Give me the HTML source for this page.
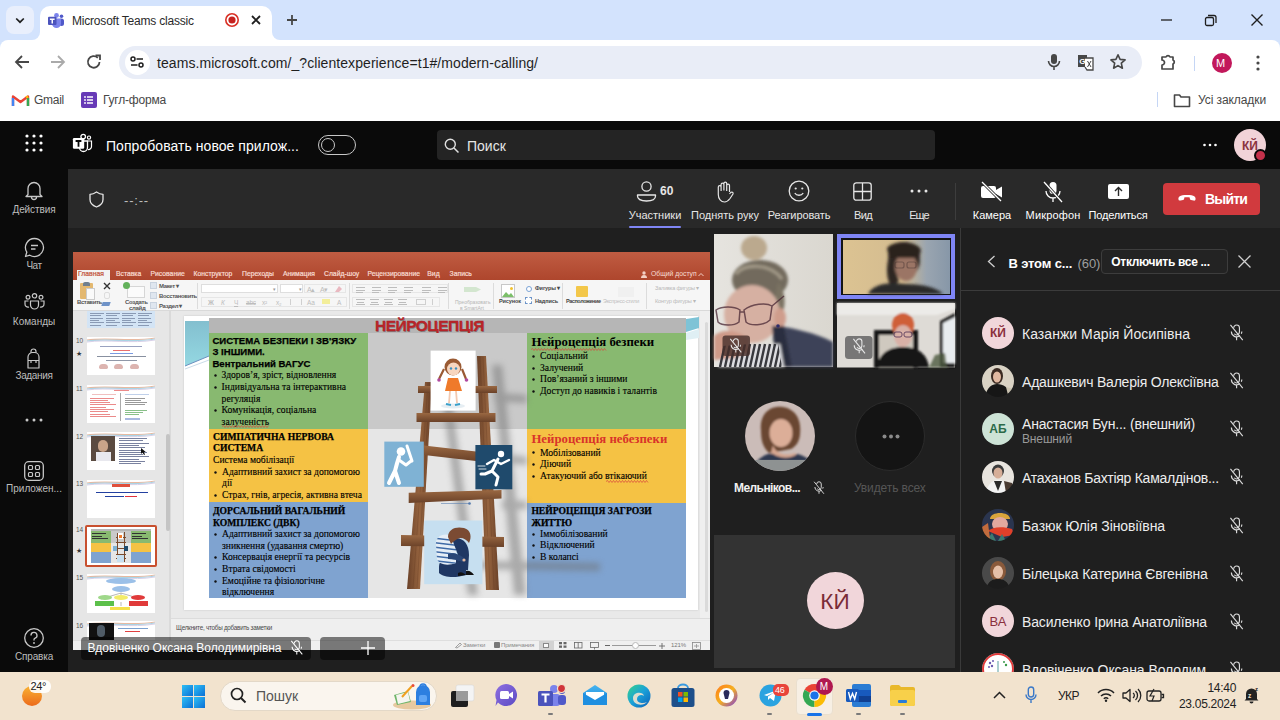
<!DOCTYPE html>
<html><head><meta charset="utf-8">
<style>
*{margin:0;padding:0;box-sizing:border-box}
html,body{width:1280px;height:720px;overflow:hidden;background:#1f1f1f;font-family:"Liberation Sans",sans-serif}
.a{position:absolute}
.t{position:absolute;white-space:nowrap;line-height:1}
svg{position:absolute;overflow:visible}
</style></head><body>
<!-- ===== CHROME TAB STRIP ===== -->
<div class="a" style="left:0;top:0;width:1280px;height:40px;background:#d3e3fd"></div>
<div class="a" style="left:6px;top:6px;width:28px;height:28px;border-radius:8px;background:#e9effc"></div>
<svg style="left:14px;top:14px" width="12" height="12"><path d="M2.2 4.5 L6 8.2 L9.8 4.5" fill="none" stroke="#1f1f1f" stroke-width="1.7"/></svg>
<!-- active tab -->
<div class="a" style="left:40px;top:6px;width:232px;height:36px;background:#fff;border-radius:10px 10px 0 0"></div>
<div class="a" style="left:32px;top:32px;width:8px;height:8px;background:#fff"></div>
<div class="a" style="left:32px;top:32px;width:8px;height:8px;background:#d3e3fd;border-radius:0 0 8px 0"></div>
<div class="a" style="left:272px;top:32px;width:8px;height:8px;background:#fff"></div>
<div class="a" style="left:272px;top:32px;width:8px;height:8px;background:#d3e3fd;border-radius:0 0 0 8px"></div>
<!-- teams tab icon -->
<svg style="left:48px;top:12.5px" width="16" height="16" viewBox="0 0 16 16"><circle cx="13.5" cy="3.2" r="1.8" fill="#5059c9"/><rect x="11" y="5.5" width="5" height="7.5" rx="2.5" fill="#5059c9"/><circle cx="8.5" cy="2.4" r="2.4" fill="#7b83eb"/><path d="M4 5.5 H13 V10.5 A4.5 4.5 0 0 1 4 10.5 Z" fill="#7b83eb"/><rect x="0" y="3.8" width="8.5" height="8.2" rx="1" fill="#4b53bc"/><path d="M1.9 6.2 H6.6 M4.25 6.2 V10.6" stroke="#fff" stroke-width="1.5"/></svg>
<div class="t" style="left:72px;top:15px;font-size:12px;letter-spacing:-0.2px;color:#2a2a2a">Microsoft Teams classic</div>
<svg style="left:224px;top:12px" width="16" height="16"><circle cx="8" cy="8" r="6.2" fill="none" stroke="#d93025" stroke-width="1.6"/><circle cx="8" cy="8" r="3.6" fill="#c5221f"/></svg>
<svg style="left:250px;top:14px" width="12" height="12"><path d="M2 2 L10 10 M10 2 L2 10" stroke="#1f1f1f" stroke-width="1.8"/></svg>
<svg style="left:286px;top:14px" width="12" height="12"><path d="M6 1 V11 M1 6 H11" stroke="#474747" stroke-width="1.8"/></svg>
<!-- window controls -->
<svg style="left:1160px;top:14px" width="14" height="12"><path d="M1 6 H12" stroke="#1f1f1f" stroke-width="1.3"/></svg>
<svg style="left:1204px;top:14px" width="14" height="12"><rect x="1.5" y="3.5" width="8" height="8" rx="1.5" fill="none" stroke="#1f1f1f" stroke-width="1.3"/><path d="M4 1.5 H10 a2 2 0 0 1 2 2 V9" fill="none" stroke="#1f1f1f" stroke-width="1.3"/></svg>
<svg style="left:1250px;top:14px" width="14" height="12"><path d="M1.5 0.5 L12.5 11.5 M12.5 0.5 L1.5 11.5" stroke="#1f1f1f" stroke-width="1.4"/></svg>

<!-- ===== TOOLBAR ===== -->
<div class="a" style="left:0;top:40px;width:1280px;height:81px;background:#fff"></div>
<div class="a" style="left:1272px;top:40px;width:8px;height:8px;background:#d3e3fd"></div>
<div class="a" style="left:0;top:40px;width:8px;height:8px;background:#d3e3fd"></div>
<div class="a" style="left:0;top:40px;width:16px;height:16px;background:#fff;border-top-left-radius:8px"></div>
<div class="a" style="left:1264px;top:40px;width:16px;height:16px;background:#fff;border-top-right-radius:8px"></div>
<svg style="left:14px;top:54px" width="16" height="16"><path d="M15 8 H2 M8 2 L2 8 L8 14" fill="none" stroke="#474747" stroke-width="1.8"/></svg>
<svg style="left:50px;top:54px" width="16" height="16"><path d="M1 8 H14 M8 2 L14 8 L8 14" fill="none" stroke="#aaa" stroke-width="1.8"/></svg>
<svg style="left:86px;top:54px" width="16" height="16"><path d="M13.5 8 A5.8 5.8 0 1 1 11.8 3.8" fill="none" stroke="#474747" stroke-width="1.8"/><path d="M9.5 1.5 H14 V6" fill="none" stroke="#474747" stroke-width="1.8"/></svg>
<div class="a" style="left:119px;top:46px;width:1023px;height:33px;border-radius:17px;background:#e9edf7"></div>
<div class="a" style="left:125px;top:50px;width:25px;height:25px;border-radius:13px;background:#fff"></div>
<svg style="left:130px;top:56px" width="14" height="12"><path d="M6.5 3 H13 M1 9 H7.5" stroke="#1f1f1f" stroke-width="1.7"/><circle cx="3" cy="3" r="2" fill="none" stroke="#1f1f1f" stroke-width="1.5"/><circle cx="11" cy="9" r="2" fill="none" stroke="#1f1f1f" stroke-width="1.5"/></svg>
<div class="t" style="left:157px;top:56px;font-size:14px;letter-spacing:0.07px;color:#1f1f1f">teams.microsoft.com/_?clientexperience=t1#/modern-calling/</div>
<!-- mic -->
<svg style="left:1046px;top:53px" width="16" height="18"><rect x="5" y="1" width="6" height="10" rx="3" fill="#474747"/><path d="M2.5 8 A5.5 5.5 0 0 0 13.5 8 M8 13.5 V17" fill="none" stroke="#474747" stroke-width="1.6"/></svg>
<!-- translate -->
<svg style="left:1077px;top:54px" width="18" height="17"><rect x="1" y="1" width="9" height="12" fill="#474747"/><text x="2.2" y="10" font-size="8" font-family="Liberation Sans" font-weight="bold" fill="#fff">G</text><path d="M8 4 H16 V16 H10 L8 13" fill="#fff" stroke="#474747" stroke-width="1.3"/><path d="M10.5 7 L14 13 M14 7 L10.5 13" stroke="#474747" stroke-width="1"/></svg>
<!-- star -->
<svg style="left:1109px;top:53px" width="18" height="18"><path d="M9 1.8 L11.1 6.4 L16.1 6.9 L12.3 10.2 L13.4 15.2 L9 12.6 L4.6 15.2 L5.7 10.2 L1.9 6.9 L6.9 6.4 Z" fill="none" stroke="#474747" stroke-width="1.6" stroke-linejoin="round"/></svg>
<!-- extensions -->
<svg style="left:1160px;top:54px" width="18" height="17"><path d="M2 3 H6 A2.2 2.2 0 0 1 10 3 H13 V6 A2.2 2.2 0 0 1 13 10 V15 H2 V11 A2.2 2.2 0 0 0 2 6 Z" fill="none" stroke="#474747" stroke-width="1.7" stroke-linejoin="round"/></svg>
<div class="a" style="left:1194px;top:56px;width:1px;height:15px;background:#c5d6f5"></div>
<div class="a" style="left:1212px;top:53px;width:20px;height:20px;border-radius:10px;background:#c2185b"></div>
<div class="t" style="left:1216px;top:58px;font-size:11px;color:#fff">M</div>
<svg style="left:1254px;top:54px" width="8" height="18"><circle cx="4" cy="3" r="1.6" fill="#474747"/><circle cx="4" cy="9" r="1.6" fill="#474747"/><circle cx="4" cy="15" r="1.6" fill="#474747"/></svg>
<!-- bookmarks -->
<svg style="left:12px;top:94px" width="17" height="13" viewBox="0 0 17 13"><path d="M1 12 V2.5 L8.5 8 L16 2.5 V12" fill="none" stroke="#ea4335" stroke-width="2.4" stroke-linejoin="round"/><path d="M1 4 V12" stroke="#4285f4" stroke-width="2.4"/><path d="M16 4 V12" stroke="#34a853" stroke-width="2.4"/><path d="M14 3.5 L16 2.5" stroke="#fbbc04" stroke-width="2.4"/></svg>
<div class="t" style="left:34px;top:94px;font-size:12px;letter-spacing:-0.27px;color:#474747">Gmail</div>
<div class="a" style="left:81px;top:92px;width:16px;height:16px;background:#673ab7;border-radius:2px"></div>
<svg style="left:81px;top:92px" width="16" height="16"><path d="M6 5 H12 M6 8 H12 M6 11 H12" stroke="#fff" stroke-width="1.3"/><circle cx="4" cy="5" r=".9" fill="#fff"/><circle cx="4" cy="8" r=".9" fill="#fff"/><circle cx="4" cy="11" r=".9" fill="#fff"/></svg>
<div class="t" style="left:103px;top:94px;font-size:12px;letter-spacing:-0.2px;color:#474747">Гугл-форма</div>
<div class="a" style="left:1157px;top:92px;width:1px;height:15px;background:#c5d6f5"></div>
<svg style="left:1173px;top:93px" width="18" height="15"><path d="M1.5 2 H6.5 L8 4 H16.5 V13.5 H1.5 Z" fill="none" stroke="#474747" stroke-width="1.6" stroke-linejoin="round"/></svg>
<div class="t" style="left:1198px;top:94px;font-size:12px;letter-spacing:-0.08px;color:#474747">Усі закладки</div>

<!-- ===== TEAMS TOP BAR ===== -->
<div class="a" style="left:0;top:121px;width:1280px;height:48px;background:#0a0a0a"></div>

<!-- waffle -->
<svg style="left:25px;top:134px" width="18" height="18"><g fill="#fff"><circle cx="2" cy="2" r="1.6"/><circle cx="9" cy="2" r="1.6"/><circle cx="16" cy="2" r="1.6"/><circle cx="2" cy="9" r="1.6"/><circle cx="9" cy="9" r="1.6"/><circle cx="16" cy="9" r="1.6"/><circle cx="2" cy="16" r="1.6"/><circle cx="9" cy="16" r="1.6"/><circle cx="16" cy="16" r="1.6"/></g></svg>
<!-- teams logo white -->
<svg style="left:72px;top:134px" width="21" height="19" viewBox="0 0 21 19"><circle cx="11.2" cy="2.6" r="2.3" fill="none" stroke="#fff" stroke-width="1.3"/><circle cx="17" cy="3.6" r="1.6" fill="none" stroke="#fff" stroke-width="1.2"/><path d="M7.5 7 H15.5 V13.5 A4 4 0 0 1 7.5 13.5 Z" fill="none" stroke="#fff" stroke-width="1.3"/><path d="M15.5 7 H19.5 V12.5 A3 3 0 0 1 16 15.5" fill="none" stroke="#fff" stroke-width="1.2"/><rect x="0.9" y="4" width="11.3" height="10.7" rx="1.2" fill="#fff"/><path d="M3.6 7 H9.4 M6.5 7 V12.8" stroke="#0a0a0a" stroke-width="1.8"/></svg>
<div class="t" style="left:106px;top:139px;font-size:14px;letter-spacing:0.05px;color:#fff">Попробовать новое прилож...</div>
<div class="a" style="left:318px;top:135px;width:38px;height:20px;border-radius:10px;border:1px solid #c8c8c8"></div>
<div class="a" style="left:320.5px;top:138px;width:14px;height:14px;border-radius:7px;border:1px solid #c8c8c8"></div>
<!-- search -->
<div class="a" style="left:437px;top:130px;width:498px;height:30px;border-radius:4px;background:#242424"></div>
<svg style="left:444px;top:138px" width="16" height="16"><circle cx="6.3" cy="6.3" r="5" fill="none" stroke="#e0e0e0" stroke-width="1.4"/><path d="M10 10 L14.5 14.5" stroke="#e0e0e0" stroke-width="1.5"/></svg>
<div class="t" style="left:467px;top:139px;font-size:14px;color:#e6e6e6">Поиск</div>
<svg style="left:1202px;top:143px" width="16" height="4"><g fill="#fff"><circle cx="2.5" cy="2" r="1.3"/><circle cx="8" cy="2" r="1.3"/><circle cx="13.5" cy="2" r="1.3"/></g></svg>
<div class="a" style="left:1234px;top:129px;width:32px;height:32px;border-radius:16px;background:#f1d3d8"></div>
<div class="t" style="left:1234px;top:139.5px;width:32px;text-align:center;font-size:12px;font-weight:700;color:#8a3340">КЙ</div>
<div class="a" style="left:1254px;top:149px;width:13px;height:13px;border-radius:7px;background:#c4314b;border:2px solid #0a0a0a"></div>

<!-- ===== LEFT RAIL ===== -->
<div class="a" style="left:0;top:169px;width:68px;height:503px;background:#0a0a0a"></div>
<svg style="left:24px;top:180px" width="20" height="21" viewBox="0 0 20 21"><path d="M4 14.5 V8.5 A6 6 0 0 1 16 8.5 V14.5 L18 16.5 H2 Z" fill="none" stroke="#c8c8c8" stroke-width="1.3" stroke-linejoin="round"/><path d="M7.5 17 A2.5 2.5 0 0 0 12.5 17" fill="none" stroke="#c8c8c8" stroke-width="1.3"/></svg>
<div class="t" style="left:0;top:205px;width:68px;text-align:center;font-size:10px;letter-spacing:-0.1px;color:#bdbdbd">Действия</div>
<svg style="left:24px;top:237px" width="21" height="21" viewBox="0 0 21 21"><path d="M10.5 1.5 A9 9 0 1 1 5.8 18.2 L1.5 19.5 L2.8 15.2 A9 9 0 0 1 10.5 1.5 Z" fill="none" stroke="#c8c8c8" stroke-width="1.3" stroke-linejoin="round"/><path d="M7 8.5 H14 M7 12 H11.5" stroke="#c8c8c8" stroke-width="1.3"/></svg>
<div class="t" style="left:0;top:261px;width:68px;text-align:center;font-size:10px;letter-spacing:-0.5px;color:#bdbdbd">Чат</div>
<svg style="left:24px;top:293px" width="21" height="17" viewBox="0 0 21 17"><circle cx="10.5" cy="2.8" r="2.2" fill="none" stroke="#c8c8c8" stroke-width="1.2"/><circle cx="4" cy="4.2" r="1.9" fill="none" stroke="#c8c8c8" stroke-width="1.2"/><circle cx="17" cy="4.2" r="1.9" fill="none" stroke="#c8c8c8" stroke-width="1.2"/><path d="M6.5 8 H14.5 V12 A4 4 0 0 1 6.5 12 Z" fill="none" stroke="#c8c8c8" stroke-width="1.2"/><path d="M4.5 8 H1 V11 A3 3 0 0 0 5 14" fill="none" stroke="#c8c8c8" stroke-width="1.2"/><path d="M16.5 8 H20 V11 A3 3 0 0 1 16 14" fill="none" stroke="#c8c8c8" stroke-width="1.2"/></svg>
<div class="t" style="left:0;top:317px;width:68px;text-align:center;font-size:10px;color:#bdbdbd">Команды</div>
<svg style="left:25px;top:349px" width="17" height="20" viewBox="0 0 17 20"><path d="M6 3.5 V2.5 A2.5 2.5 0 0 1 11 2.5 V3.5" fill="none" stroke="#c8c8c8" stroke-width="1.2"/><path d="M3 19 V8 A4.5 4.5 0 0 1 7.5 3.5 H9.5 A4.5 4.5 0 0 1 14 8 V19 Z" fill="none" stroke="#c8c8c8" stroke-width="1.2" stroke-linejoin="round"/><path d="M3 11.5 H14 M6 11.5 V14 M11 11.5 V14" fill="none" stroke="#c8c8c8" stroke-width="1.2"/></svg>
<div class="t" style="left:0;top:371px;width:68px;text-align:center;font-size:10px;letter-spacing:-0.35px;color:#bdbdbd">Задания</div>
<svg style="left:25px;top:418px" width="18" height="4"><g fill="#c8c8c8"><circle cx="2" cy="2" r="1.5"/><circle cx="9" cy="2" r="1.5"/><circle cx="16" cy="2" r="1.5"/></g></svg>
<svg style="left:24px;top:461px" width="20" height="20" viewBox="0 0 20 20"><rect x="0.7" y="0.7" width="18.6" height="18.6" rx="4" fill="none" stroke="#c8c8c8" stroke-width="1.3"/><rect x="4.5" y="4.5" width="4" height="4" rx="1" fill="none" stroke="#c8c8c8" stroke-width="1.2"/><rect x="11.5" y="4.5" width="4" height="4" rx="1" fill="none" stroke="#c8c8c8" stroke-width="1.2"/><rect x="4.5" y="11.5" width="4" height="4" rx="1" fill="none" stroke="#c8c8c8" stroke-width="1.2"/><rect x="11.5" y="11.5" width="4" height="4" rx="1" fill="none" stroke="#c8c8c8" stroke-width="1.2"/></svg>
<div class="t" style="left:0;top:484px;width:68px;text-align:center;font-size:10px;color:#bdbdbd">Приложен...</div>
<svg style="left:24px;top:628px" width="20" height="20" viewBox="0 0 20 20"><circle cx="10" cy="10" r="9.3" fill="none" stroke="#c8c8c8" stroke-width="1.3"/><path d="M7 7.5 A3 3 0 1 1 10.8 10.3 C10.2 10.6 10 11 10 11.8 V12.5" fill="none" stroke="#c8c8c8" stroke-width="1.3"/><circle cx="10" cy="15" r=".9" fill="#c8c8c8"/></svg>
<div class="t" style="left:0;top:652px;width:68px;text-align:center;font-size:10px;letter-spacing:-0.15px;color:#bdbdbd">Справка</div>

<!-- ===== MEETING HEADER ===== -->
<div class="a" style="left:68px;top:169px;width:1212px;height:59px;background:#292929"></div>
<svg style="left:89px;top:191px" width="15" height="17" viewBox="0 0 15 17"><path d="M7.5 1 C5 2.8 3 3.3 1 3.3 V8.5 C1 12 3.5 14.5 7.5 16 C11.5 14.5 14 12 14 8.5 V3.3 C12 3.3 10 2.8 7.5 1 Z" fill="none" stroke="#e6e6e6" stroke-width="1.3" stroke-linejoin="round"/></svg>
<div class="t" style="left:124px;top:194px;font-size:13px;letter-spacing:0.8px;color:#bdbdbd">--:--</div>
<!-- participants -->
<svg style="left:636px;top:181px" width="21" height="21" viewBox="0 0 21 21"><circle cx="10.5" cy="5.5" r="4.6" fill="none" stroke="#e6e6e6" stroke-width="1.3"/><path d="M1.5 14 H19.5 V15 C19.5 18 16 20 10.5 20 C5 20 1.5 18 1.5 15 Z" fill="none" stroke="#e6e6e6" stroke-width="1.3" stroke-linejoin="round"/></svg>
<div class="t" style="left:660px;top:185px;font-size:12px;font-weight:700;color:#e6e6e6">60</div>
<div class="t" style="left:605px;top:210px;width:100px;text-align:center;font-size:11px;color:#e6e6e6">Участники</div>
<div class="a" style="left:629px;top:225.8px;width:52px;height:2.4px;border-radius:1.2px;background:#7f85f5"></div>
<!-- hand -->
<svg style="left:713.5px;top:180.5px" width="22" height="22" viewBox="0 0 22 22"><g transform="translate(21.5,0) scale(-1,1)"><path d="M6 11 V4.5 A1.4 1.4 0 0 1 8.8 4.5 V10 M8.8 9.5 V2.5 A1.4 1.4 0 0 1 11.6 2.5 V9.5 M11.6 9.5 V3.5 A1.4 1.4 0 0 1 14.4 3.5 V10 M14.4 10 V6 A1.4 1.4 0 0 1 17.2 6 V13.5 C17.2 18 14.5 21 11 21 C8.5 21 7 19.5 5.5 17.5 L2.5 13 A1.4 1.4 0 0 1 4.8 11.5 L6 13" fill="none" stroke="#e6e6e6" stroke-width="1.2" stroke-linejoin="round"/></g></svg>
<div class="t" style="left:675px;top:210px;width:100px;text-align:center;font-size:11px;color:#e6e6e6">Поднять руку</div>
<!-- smile -->
<svg style="left:788px;top:180px" width="22" height="22" viewBox="0 0 22 22"><circle cx="11" cy="11" r="9.8" fill="none" stroke="#e6e6e6" stroke-width="1.3"/><circle cx="7.7" cy="8.5" r="1.1" fill="#e6e6e6"/><circle cx="14.3" cy="8.5" r="1.1" fill="#e6e6e6"/><path d="M6.8 13 C8.5 16 13.5 16 15.2 13" fill="none" stroke="#e6e6e6" stroke-width="1.3"/></svg>
<div class="t" style="left:749px;top:210px;width:100px;text-align:center;font-size:11px;letter-spacing:-0.12px;color:#e6e6e6">Реагировать</div>
<!-- view grid -->
<svg style="left:853px;top:182px" width="19" height="19" viewBox="0 0 19 19"><rect x="0.8" y="0.8" width="17.4" height="17.4" rx="2.5" fill="none" stroke="#e6e6e6" stroke-width="1.3"/><path d="M9.5 1 V18 M1 9.5 H18" stroke="#e6e6e6" stroke-width="1.3"/></svg>
<div class="t" style="left:813px;top:210px;width:100px;text-align:center;font-size:11px;letter-spacing:-0.6px;color:#e6e6e6">Вид</div>
<svg style="left:910px;top:189px" width="18" height="4"><g fill="#e6e6e6"><circle cx="2" cy="2" r="1.5"/><circle cx="9" cy="2" r="1.5"/><circle cx="16" cy="2" r="1.5"/></g></svg>
<div class="t" style="left:869px;top:210px;width:100px;text-align:center;font-size:11px;letter-spacing:-0.9px;color:#e6e6e6">Еще</div>
<div class="a" style="left:955px;top:183px;width:1px;height:37px;background:#3d3d3d"></div>
<!-- camera off -->
<svg style="left:980px;top:181px" width="24" height="21" viewBox="0 0 24 21"><rect x="1" y="5" width="15" height="12" rx="2" fill="#fff"/><path d="M16 9 L22 5.5 V16.5 L16 13 Z" fill="#fff"/><path d="M2 1 L21 20" stroke="#292929" stroke-width="3"/><path d="M2 1 L21 20" stroke="#fff" stroke-width="1.3"/></svg>
<div class="t" style="left:942px;top:210px;width:100px;text-align:center;font-size:11px;color:#fff">Камера</div>
<!-- mic off -->
<svg style="left:1042px;top:181px" width="22" height="22" viewBox="0 0 22 22"><rect x="7.5" y="1" width="7" height="12" rx="3.5" fill="#fff"/><path d="M4 10 A7 7 0 0 0 18 10 M11 17 V21" fill="none" stroke="#fff" stroke-width="1.3"/><path d="M2 1 L20 21" stroke="#292929" stroke-width="3"/><path d="M2 1 L20 21" stroke="#fff" stroke-width="1.3"/></svg>
<div class="t" style="left:1003px;top:210px;width:100px;text-align:center;font-size:11px;letter-spacing:0.15px;color:#fff">Микрофон</div>
<!-- share -->
<svg style="left:1108px;top:184px" width="21" height="15" viewBox="0 0 21 15"><rect x="0" y="0" width="21" height="15" rx="2" fill="#fff"/><path d="M10.5 12 V3.5 M7 7 L10.5 3.5 L14 7" fill="none" stroke="#292929" stroke-width="1.4"/></svg>
<div class="t" style="left:1068px;top:210px;width:100px;text-align:center;font-size:11px;letter-spacing:-0.17px;color:#fff">Поделиться</div>
<!-- leave -->
<div class="a" style="left:1163px;top:183px;width:97px;height:32px;border-radius:4px;background:#d13a3e"></div>
<svg style="left:1177px;top:193px" width="20" height="9" viewBox="0 0 20 9"><path d="M1.5 6.5 C1 4 2.5 2 10 2 C17.5 2 19 4 18.5 6.5 C18.3 7.5 17.5 7.8 16.5 7.6 L14 7 C13.2 6.8 12.8 6.3 12.8 5.5 V4.6 C11 4.2 9 4.2 7.2 4.6 V5.5 C7.2 6.3 6.8 6.8 6 7 L3.5 7.6 C2.5 7.8 1.7 7.5 1.5 6.5 Z" fill="#fff"/></svg>
<div class="t" style="left:1205px;top:192px;font-size:14px;font-weight:700;letter-spacing:-0.8px;color:#fff">Выйти</div>

<!-- ===== STAGE ===== -->
<div class="a" style="left:68px;top:228px;width:893px;height:444px;background:#1f1f1f"></div>
<div class="a" style="left:73px;top:252px;width:637px;height:398px;background:#e8e8e8;"></div>
<div class="a" style="left:73px;top:252px;width:637px;height:28px;background:linear-gradient(#c05c42,#ae462d);"></div>
<div class="a" style="left:77px;top:270px;width:33px;height:10px;background:#f3f3f3;"></div>
<div class="t" style="left:78.0px;top:271.44px;font-family:'Liberation Sans',sans-serif;font-size:6.8px;font-weight:400;color:#c24f35;letter-spacing:0px;-webkit-text-stroke:0.2px #c24f35">Главная</div>
<div class="t" style="left:116.0px;top:271.44px;font-family:'Liberation Sans',sans-serif;font-size:6.8px;font-weight:400;color:#f8dcd3;letter-spacing:0px;-webkit-text-stroke:0.2px #f8dcd3">Вставка</div>
<div class="t" style="left:150.5px;top:271.44px;font-family:'Liberation Sans',sans-serif;font-size:6.8px;font-weight:400;color:#f8dcd3;letter-spacing:0px;-webkit-text-stroke:0.2px #f8dcd3">Рисование</div>
<div class="t" style="left:193.5px;top:271.44px;font-family:'Liberation Sans',sans-serif;font-size:6.8px;font-weight:400;color:#f8dcd3;letter-spacing:0px;-webkit-text-stroke:0.2px #f8dcd3">Конструктор</div>
<div class="t" style="left:242.0px;top:271.44px;font-family:'Liberation Sans',sans-serif;font-size:6.8px;font-weight:400;color:#f8dcd3;letter-spacing:0px;-webkit-text-stroke:0.2px #f8dcd3">Переходы</div>
<div class="t" style="left:283.0px;top:271.44px;font-family:'Liberation Sans',sans-serif;font-size:6.8px;font-weight:400;color:#f8dcd3;letter-spacing:0px;-webkit-text-stroke:0.2px #f8dcd3">Анимация</div>
<div class="t" style="left:324.0px;top:271.44px;font-family:'Liberation Sans',sans-serif;font-size:6.8px;font-weight:400;color:#f8dcd3;letter-spacing:0px;-webkit-text-stroke:0.2px #f8dcd3">Слайд-шоу</div>
<div class="t" style="left:367.5px;top:271.44px;font-family:'Liberation Sans',sans-serif;font-size:6.8px;font-weight:400;color:#f8dcd3;letter-spacing:0px;-webkit-text-stroke:0.2px #f8dcd3">Рецензирование</div>
<div class="t" style="left:427.3px;top:271.44px;font-family:'Liberation Sans',sans-serif;font-size:6.8px;font-weight:400;color:#f8dcd3;letter-spacing:0px;-webkit-text-stroke:0.2px #f8dcd3">Вид</div>
<div class="t" style="left:449.6px;top:271.44px;font-family:'Liberation Sans',sans-serif;font-size:6.8px;font-weight:400;color:#f8dcd3;letter-spacing:0px;-webkit-text-stroke:0.2px #f8dcd3">Запись</div>
<div class="t" style="left:651.0px;top:271.44px;font-family:'Liberation Sans',sans-serif;font-size:6.8px;font-weight:400;color:#f8dcd3;letter-spacing:0px;">Общий доступ</div>
<svg style="left:641px;top:271px" width="8" height="7"><circle cx="3" cy="2" r="1.7" fill="#f3d0c5"/><path d="M0 7 A3 3 0 0 1 6 7Z" fill="#f3d0c5"/></svg>
<svg style="left:698px;top:272px" width="6" height="5"><path d="M0.5 4 L3 1.5 L5.5 4" fill="none" stroke="#f3d0c5" stroke-width="1"/></svg>
<div class="a" style="left:73px;top:280px;width:637px;height:31px;background:#f6f6f6;border-bottom:1px solid #d9d9d9"></div>
<div class="a" style="left:80px;top:283px;width:13px;height:16px;background:#e3b870;border-radius:1px"></div>
<div class="a" style="left:86px;top:288px;width:9px;height:12px;background:#fafafa;border:1px solid #ccc"></div>
<div class="a" style="left:83px;top:282px;width:7px;height:4px;background:#6f7f8f;border-radius:2px 2px 0 0"></div>
<div class="t" style="left:77.0px;top:298.92px;font-family:'Liberation Sans',sans-serif;font-size:6px;font-weight:700;color:#555;letter-spacing:-0.4px;">Вставить</div>
<svg style="left:103px;top:282px" width="8" height="8"><path d="M1 1 L7 7 M7 1 L1 7" stroke="#333" stroke-width="1.4"/></svg>
<div class="a" style="left:104px;top:292px;width:6px;height:7px;background:#f6f6f6;border:1px solid #ddd;border-radius:2px"></div>
<div class="a" style="left:102px;top:302px;width:8px;height:4px;background:#6f93c8;transform:skewX(-20deg)"></div>
<div class="a" style="left:127px;top:286px;width:18px;height:12px;background:#fbfbfb;border:1px solid #d6d6d6"></div>
<div class="a" style="left:123px;top:282px;width:7px;height:7px;border-radius:4px;background:#62b15a"></div>
<div class="t" style="left:125.0px;top:298.92px;font-family:'Liberation Sans',sans-serif;font-size:6px;font-weight:700;color:#555;letter-spacing:-0.3px;">Создать</div>
<div class="t" style="left:129.0px;top:304.92px;font-family:'Liberation Sans',sans-serif;font-size:6px;font-weight:700;color:#555;letter-spacing:-0.3px;">слайд</div>
<div class="a" style="left:150px;top:282px;width:7px;height:7px;background:#dfe6ef;border:1px solid #c9d3df"></div>
<div class="t" style="left:159.0px;top:282.92px;font-family:'Liberation Sans',sans-serif;font-size:6px;font-weight:700;color:#555;letter-spacing:-0.35px;">Макет ▾</div>
<div class="a" style="left:150px;top:292px;width:7px;height:7px;background:#dfe6ef;border:1px solid #c9d3df"></div>
<div class="t" style="left:159.0px;top:292.92px;font-family:'Liberation Sans',sans-serif;font-size:6px;font-weight:700;color:#555;letter-spacing:-0.35px;">Восстановить</div>
<div class="a" style="left:150px;top:302px;width:7px;height:7px;background:#dfe6ef;border:1px solid #c9d3df"></div>
<div class="t" style="left:159.0px;top:302.92px;font-family:'Liberation Sans',sans-serif;font-size:6px;font-weight:700;color:#555;letter-spacing:-0.35px;">Раздел ▾</div>
<div class="a" style="left:197px;top:283px;width:1px;height:26px;background:#dcdcdc;"></div>
<div class="a" style="left:349px;top:283px;width:1px;height:26px;background:#dcdcdc;"></div>
<div class="a" style="left:448px;top:283px;width:1px;height:26px;background:#dcdcdc;"></div>
<div class="a" style="left:493px;top:283px;width:1px;height:26px;background:#dcdcdc;"></div>
<div class="a" style="left:562px;top:283px;width:1px;height:26px;background:#dcdcdc;"></div>
<div class="a" style="left:646px;top:283px;width:1px;height:26px;background:#dcdcdc;"></div>
<div class="a" style="left:201px;top:284px;width:77px;height:9px;background:#fff;border:1px solid #dedede"></div>
<div class="a" style="left:280px;top:284px;width:23px;height:9px;background:#fff;border:1px solid #dedede"></div>
<div class="a" style="left:304px;top:284px;width:42px;height:9px;background:#f6f6f6;border:1px solid #e6e6e6"></div>
<div class="a" style="left:201px;top:297px;width:146px;height:10px;background:#f6f6f6;border:1px solid #e6e6e6"></div>
<div class="a" style="left:352px;top:284px;width:96px;height:9px;background:#f6f6f6;border:1px solid #e6e6e6"></div>
<div class="a" style="left:352px;top:297px;width:88px;height:10px;background:#f6f6f6;border:1px solid #e6e6e6"></div>
<div class="t" style="left:273.0px;top:286.77px;font-family:'Liberation Sans',sans-serif;font-size:5px;font-weight:400;color:#999;letter-spacing:0px;">▾</div>
<div class="t" style="left:299.0px;top:286.77px;font-family:'Liberation Sans',sans-serif;font-size:5px;font-weight:400;color:#999;letter-spacing:0px;">▾</div>
<div class="t" style="left:307.0px;top:286.07px;font-family:'Liberation Sans',sans-serif;font-size:7px;font-weight:400;color:#bdbdbd;letter-spacing:-0.3px;">A▴</div>
<div class="t" style="left:320.0px;top:286.07px;font-family:'Liberation Sans',sans-serif;font-size:7px;font-weight:400;color:#bdbdbd;letter-spacing:-0.3px;">A▾</div>
<svg style="left:334px;top:285px" width="9" height="8"><path d="M1 7 L5 1 L8 4 L5 7 Z" fill="#e9b8c0"/></svg>
<div class="t" style="left:208.0px;top:299.50px;font-family:'Liberation Sans',sans-serif;font-size:6.5px;font-weight:400;color:#bdbdbd;letter-spacing:-0.2px;font-weight:700">Ж</div>
<div class="t" style="left:221.0px;top:299.50px;font-family:'Liberation Sans',sans-serif;font-size:6.5px;font-weight:400;color:#bdbdbd;letter-spacing:-0.2px;font-style:italic">К</div>
<div class="t" style="left:234.0px;top:299.50px;font-family:'Liberation Sans',sans-serif;font-size:6.5px;font-weight:400;color:#bdbdbd;letter-spacing:-0.2px;text-decoration:underline">Ч</div>
<div class="t" style="left:246.0px;top:299.50px;font-family:'Liberation Sans',sans-serif;font-size:6.5px;font-weight:400;color:#bdbdbd;letter-spacing:-0.2px;text-decoration:line-through">abc</div>
<div class="t" style="left:262.0px;top:299.50px;font-family:'Liberation Sans',sans-serif;font-size:6.5px;font-weight:400;color:#bdbdbd;letter-spacing:-0.2px;">x²</div>
<div class="t" style="left:276.0px;top:299.50px;font-family:'Liberation Sans',sans-serif;font-size:6.5px;font-weight:400;color:#bdbdbd;letter-spacing:-0.2px;">x₂</div>
<div class="t" style="left:307.0px;top:299.50px;font-family:'Liberation Sans',sans-serif;font-size:6.5px;font-weight:400;color:#bdbdbd;letter-spacing:-0.2px;">Aa</div>
<div class="t" style="left:337.0px;top:299.50px;font-family:'Liberation Sans',sans-serif;font-size:6.5px;font-weight:400;color:#bdbdbd;letter-spacing:-0.2px;">A</div>
<div class="a" style="left:290px;top:299px;width:12px;height:6px;background:transparent;border-left:1px solid #d0d0d0;border-right:1px solid #d0d0d0"></div>
<div class="a" style="left:322px;top:299px;width:8px;height:5px;background:#f3ee9a;"></div>
<div class="a" style="left:356px;top:287px;width:9px;height:1px;background:#bdbdbd;"></div>
<div class="a" style="left:356px;top:289.5px;width:9px;height:1.0px;background:#bdbdbd;"></div>
<div class="a" style="left:356px;top:292px;width:7px;height:1px;background:#bdbdbd;"></div>
<div class="a" style="left:372px;top:287px;width:9px;height:1px;background:#bdbdbd;"></div>
<div class="a" style="left:372px;top:289.5px;width:9px;height:1.0px;background:#bdbdbd;"></div>
<div class="a" style="left:372px;top:292px;width:7px;height:1px;background:#bdbdbd;"></div>
<div class="a" style="left:388px;top:287px;width:9px;height:1px;background:#bdbdbd;"></div>
<div class="a" style="left:388px;top:289.5px;width:9px;height:1.0px;background:#bdbdbd;"></div>
<div class="a" style="left:388px;top:292px;width:7px;height:1px;background:#bdbdbd;"></div>
<div class="a" style="left:404px;top:287px;width:9px;height:1px;background:#bdbdbd;"></div>
<div class="a" style="left:404px;top:289.5px;width:9px;height:1.0px;background:#bdbdbd;"></div>
<div class="a" style="left:404px;top:292px;width:7px;height:1px;background:#bdbdbd;"></div>
<div class="a" style="left:422px;top:287px;width:9px;height:1px;background:#bdbdbd;"></div>
<div class="a" style="left:422px;top:289.5px;width:9px;height:1.0px;background:#bdbdbd;"></div>
<div class="a" style="left:422px;top:292px;width:7px;height:1px;background:#bdbdbd;"></div>
<div class="a" style="left:438px;top:287px;width:9px;height:1px;background:#bdbdbd;"></div>
<div class="a" style="left:438px;top:289.5px;width:9px;height:1.0px;background:#bdbdbd;"></div>
<div class="a" style="left:438px;top:292px;width:7px;height:1px;background:#bdbdbd;"></div>
<div class="a" style="left:356px;top:299px;width:9px;height:1px;background:#bdbdbd;"></div>
<div class="a" style="left:357px;top:301.5px;width:7px;height:1.0px;background:#bdbdbd;"></div>
<div class="a" style="left:356px;top:304px;width:9px;height:1px;background:#bdbdbd;"></div>
<div class="a" style="left:370px;top:299px;width:9px;height:1px;background:#bdbdbd;"></div>
<div class="a" style="left:371px;top:301.5px;width:7px;height:1.0px;background:#bdbdbd;"></div>
<div class="a" style="left:370px;top:304px;width:9px;height:1px;background:#bdbdbd;"></div>
<div class="a" style="left:384px;top:299px;width:9px;height:1px;background:#bdbdbd;"></div>
<div class="a" style="left:385px;top:301.5px;width:7px;height:1.0px;background:#bdbdbd;"></div>
<div class="a" style="left:384px;top:304px;width:9px;height:1px;background:#bdbdbd;"></div>
<div class="a" style="left:398px;top:299px;width:9px;height:1px;background:#bdbdbd;"></div>
<div class="a" style="left:399px;top:301.5px;width:7px;height:1.0px;background:#bdbdbd;"></div>
<div class="a" style="left:398px;top:304px;width:9px;height:1px;background:#bdbdbd;"></div>
<div class="a" style="left:416px;top:299px;width:10px;height:6px;background:transparent;border:1px solid #cfcfcf"></div>
<div class="a" style="left:432px;top:299px;width:8px;height:6px;background:transparent;border-left:1px solid #cfcfcf"></div>
<div class="t" style="left:455.0px;top:299.77px;font-family:'Liberation Sans',sans-serif;font-size:5px;font-weight:400;color:#b5b5b5;letter-spacing:0px;">Преобразовать</div>
<div class="t" style="left:460.0px;top:305.77px;font-family:'Liberation Sans',sans-serif;font-size:5px;font-weight:400;color:#b5b5b5;letter-spacing:0px;">в SmartArt</div>
<svg style="left:464px;top:285px" width="18" height="9"><path d="M0 2 H12 L17 4.5 L12 7 H0 Z" fill="#d3e6cf"/></svg>
<div class="a" style="left:501px;top:284px;width:14px;height:14px;background:#fff;border:1px solid #c8c8c8"></div>
<svg style="left:502px;top:290px" width="12" height="7"><path d="M0 7 L4 2 L7 5 L9 3 L12 7Z" fill="#7cbf6a"/></svg>
<div class="a" style="left:510px;top:287px;width:3px;height:3px;border-radius:2px;background:#f2c230"></div>
<div class="t" style="left:499.0px;top:299.34px;font-family:'Liberation Sans',sans-serif;font-size:5.5px;font-weight:700;color:#444;letter-spacing:-0.1px;">Рисунок</div>
<div class="a" style="left:526px;top:286px;width:6px;height:6px;background:#fff;border:1px solid #7aa3d6;border-radius:3px"></div>
<div class="t" style="left:535.0px;top:286.34px;font-family:'Liberation Sans',sans-serif;font-size:5.5px;font-weight:700;color:#444;letter-spacing:-0.1px;">Фигуры ▾</div>
<div class="a" style="left:525px;top:297px;width:7px;height:7px;background:#fff;border:1px dashed #6c94c9"></div>
<div class="t" style="left:535.0px;top:299.34px;font-family:'Liberation Sans',sans-serif;font-size:5.5px;font-weight:700;color:#444;letter-spacing:-0.1px;">Надпись</div>
<div class="a" style="left:576px;top:286px;width:12px;height:11px;background:#f3c74a;border-radius:1px"></div>
<div class="t" style="left:566.0px;top:299.34px;font-family:'Liberation Sans',sans-serif;font-size:5.5px;font-weight:700;color:#444;letter-spacing:-0.42px;">Расположение</div>
<div class="a" style="left:618px;top:287px;width:16px;height:10px;background:#f0f0f0;"></div>
<div class="t" style="left:603.0px;top:299.34px;font-family:'Liberation Sans',sans-serif;font-size:5.5px;font-weight:400;color:#c0c0c0;letter-spacing:-0.3px;">Экспресс-стили</div>
<div class="t" style="left:655.0px;top:286.34px;font-family:'Liberation Sans',sans-serif;font-size:5.5px;font-weight:400;color:#b8b8b8;letter-spacing:-0.15px;">Заливка фигуры ▾</div>
<div class="t" style="left:655.0px;top:299.34px;font-family:'Liberation Sans',sans-serif;font-size:5.5px;font-weight:400;color:#b8b8b8;letter-spacing:-0.15px;">Контур фигуры ▾</div>
<div class="a" style="left:73px;top:311px;width:96px;height:329px;background:#e6e6e6;"></div>
<div class="a" style="left:169px;top:311px;width:2px;height:329px;background:#dadada;"></div>
<div class="a" style="left:166px;top:434px;width:4px;height:97px;background:#c4c4c4;border-radius:2px"></div>
<div class="a" style="left:171px;top:311px;width:539px;height:307px;background:#e9e9e9;"></div>
<div class="a" style="left:700px;top:311px;width:10px;height:307px;background:#efefef;"></div>
<div class="a" style="left:705px;top:322px;width:3px;height:290px;background:#dadada;border-radius:2px"></div>
<div class="a" style="left:171px;top:618px;width:539px;height:22px;background:#efefef;border-top:1px solid #dcdcdc"></div>
<div class="t" style="left:176.0px;top:625.47px;font-family:'Liberation Sans',sans-serif;font-size:6.3px;font-weight:400;color:#4a4a4a;letter-spacing:-0.25px;">Щелкните, чтобы добавить заметки</div>
<div class="a" style="left:73px;top:640px;width:637px;height:10px;background:#f0f0f0;border-top:1px solid #dedede"></div>
<svg style="left:455px;top:642px" width="7" height="6"><path d="M0.5 5.5 L5 1 L6.5 2.5 L2 6 Z" fill="none" stroke="#888" stroke-width=".8"/></svg>
<div class="t" style="left:463.0px;top:642.42px;font-family:'Liberation Sans',sans-serif;font-size:6px;font-weight:400;color:#8a8a8a;letter-spacing:-0.1px;">Заметки</div>
<div class="a" style="left:494px;top:642px;width:6px;height:6px;background:#777;border-radius:1px"></div>
<div class="t" style="left:501.0px;top:642.42px;font-family:'Liberation Sans',sans-serif;font-size:6px;font-weight:400;color:#8a8a8a;letter-spacing:-0.15px;">Примечания</div>
<div class="a" style="left:538.5px;top:640.5px;width:15.5px;height:9.5px;background:#d2d2d2;"></div>
<div class="a" style="left:543px;top:642.5px;width:6px;height:5.5px;background:#fafafa;border:1px solid #888"></div>
<svg style="left:559px;top:642px" width="8" height="6"><g fill="#666"><rect x="0" y="0" width="3" height="2.3"/><rect x="4.5" y="0" width="3" height="2.3"/><rect x="0" y="3.5" width="3" height="2.3"/><rect x="4.5" y="3.5" width="3" height="2.3"/></g></svg>
<svg style="left:574px;top:642px" width="9" height="7"><rect x=".5" y=".5" width="7.5" height="5.5" fill="none" stroke="#666" stroke-width=".8"/><path d="M4.2 .5 V6" stroke="#666" stroke-width=".8"/></svg>
<svg style="left:590px;top:642px" width="9" height="8"><rect x=".5" y=".5" width="8" height="5" fill="none" stroke="#666" stroke-width=".8"/><path d="M4.5 5.5 V7.5" stroke="#666" stroke-width=".8"/></svg>
<div class="a" style="left:605px;top:645px;width:5px;height:1px;background:#666;"></div>
<div class="a" style="left:612px;top:645px;width:44px;height:1px;background:#9a9a9a;"></div>
<div class="a" style="left:632px;top:642px;width:7px;height:7px;border-radius:4px;background:#fff;border:1px solid #bbb"></div>
<svg style="left:659px;top:642.5px" width="6" height="6"><path d="M3 0 V6 M0 3 H6" stroke="#666" stroke-width=".9"/></svg>
<div class="t" style="left:671.0px;top:642.42px;font-family:'Liberation Sans',sans-serif;font-size:6px;font-weight:400;color:#777;letter-spacing:-0.1px;">121%</div>
<svg style="left:692px;top:641.5px" width="9" height="8"><rect x=".5" y=".5" width="8" height="7" fill="none" stroke="#888" stroke-width=".8"/><path d="M2 4 H7 M4.5 2 V6" stroke="#888" stroke-width=".7"/></svg>
<div class="a" style="left:184px;top:316px;width:514px;height:294px;background:#fff;box-shadow:0 0 2px rgba(0,0,0,.15)"></div>
<svg style="left:184px;top:316px" width="26" height="60"><defs><linearGradient id="tl" x1="0" y1="0" x2="0" y2="1"><stop offset="0" stop-color="#83bfcf"/><stop offset="1" stop-color="#94d8e2"/></linearGradient></defs><path d="M1 5 H25 V40 L1 50 Z" fill="url(#tl)"/><path d="M1 50 L25 40" stroke="#6c8fbf" stroke-width="1"/><path d="M1 53 L25 44" stroke="#c9dbe8" stroke-width="1"/></svg>
<svg style="left:686px;top:316px" width="14" height="30"><path d="M0 3 L13 1 V12 L0 16 Z" fill="#7ec3d6"/><path d="M0 17 L13 13 V22 L0 24 Z" fill="#dfeff4"/></svg>
<div class="a" style="left:209px;top:317.7px;width:477px;height:15.0px;background:#b6b6b6;"></div>
<div class="t" style="left:375.0px;top:317.68px;font-family:'Liberation Sans',sans-serif;font-size:15.5px;font-weight:700;color:#bb2529;letter-spacing:-0.5px;-webkit-text-stroke:0.3px #a82026;text-shadow:0.6px 0.6px 0.6px rgba(0,0,0,.3)">НЕЙРОЦЕПЦІЯ</div>
<div class="a" style="left:209px;top:332.7px;width:159px;height:96.30000000000001px;background:#88b970;"></div>
<div class="a" style="left:209px;top:429px;width:159px;height:73px;background:#f5c244;"></div>
<div class="a" style="left:209px;top:502px;width:159px;height:96px;background:#7fa3d0;"></div>
<div class="a" style="left:368px;top:332.7px;width:159px;height:96.30000000000001px;background:#c9c9c9;"></div>
<div class="a" style="left:368px;top:429px;width:159px;height:169px;background:#e6e6e6;"></div>
<div class="a" style="left:527px;top:332.7px;width:159px;height:96.30000000000001px;background:#88b970;"></div>
<div class="a" style="left:527px;top:429px;width:159px;height:73.5px;background:#f5c244;"></div>
<div class="a" style="left:527px;top:502.5px;width:159px;height:95.5px;background:#7fa3d0;"></div>
<svg style="left:368px;top:333px" width="159" height="265" viewBox="0 0 159 265"><defs><filter id="bl" x="-50%" y="-50%" width="200%" height="200%"><feGaussianBlur stdDeviation="3"/></filter><linearGradient id="wd" x1="0" y1="0" x2="1" y2="0"><stop offset="0" stop-color="#6a4128"/><stop offset=".5" stop-color="#96643f"/><stop offset="1" stop-color="#6a4128"/></linearGradient><linearGradient id="wh" x1="0" y1="0" x2="0" y2="1"><stop offset="0" stop-color="#9a6842"/><stop offset="1" stop-color="#6a4128"/></linearGradient></defs><g fill="#6f6f6f" opacity=".5" filter="url(#bl)"><path d="M124 32 L134 32 L158 262 L146 262 Z"/><path d="M74 62 L83 62 L110 262 L100 262 Z"/><path d="M126 60 L159 62 L159 70 L126 68 Z"/><path d="M108 118 L159 124 L159 132 L108 126 Z"/><path d="M134 168 L159 168 L159 176 L134 176 Z"/><path d="M110 228 L232 230 L232 238 L110 236 Z"/></g><path d="M57 49 L64 49 L52 256 L39 256 Z" fill="url(#wd)"/><path d="M60 50 L45 255 M62 50 L49 255" stroke="#5a321c" stroke-width=".5" opacity=".5"/><path d="M109 23 L118 23 L131 257 L118 257 Z" fill="url(#wd)"/><path d="M112 24 L122 256 M115 24 L126 256" stroke="#5a321c" stroke-width=".5" opacity=".5"/><rect x="50" y="53" width="79" height="7" fill="url(#wh)"/><rect x="48.5" y="80" width="79" height="9" fill="url(#wh)"/><path d="M56 112.5 L108 118.5 L108 128 L56 122 Z" fill="url(#wh)"/><path d="M40.7 159.8 L133.5 157 L133.5 165.5 L40.7 170 Z" fill="url(#wh)"/><path d="M33 202 L136 204 L136 214 L33 213 Z" fill="url(#wh)"/><path d="M73 170.5 H101" stroke="#5a7fb0" stroke-width=".6"/><circle cx="101.5" cy="170.5" r="1.3" fill="#4f77ad"/><rect x="62.6" y="17.6" width="45" height="60" fill="#fff"/><ellipse cx="85" cy="73" rx="12" ry="2.5" fill="#e6eef3"/><path d="M80 45 L77 58 L94 58 L90 45 Z" fill="#ef7a2a"/><path d="M82 58 L81 70 M88 58 L89 70" stroke="#f3c9b0" stroke-width="1.8"/><path d="M78 71 L83 72 M87 72 L92 71" stroke="#3a9fc9" stroke-width="2"/><circle cx="85" cy="34" r="8.5" fill="#9a5a33"/><circle cx="85.5" cy="36" r="6.5" fill="#f7d6bf"/><path d="M76 36 L71 46 M94 36 L98 46" stroke="#9a5a33" stroke-width="2.2"/><circle cx="71" cy="47" r="1.8" fill="#b04aa0"/><circle cx="98.5" cy="47" r="1.8" fill="#b04aa0"/><circle cx="83" cy="35.5" r="1.2" fill="#3a8fc0"/><circle cx="88" cy="35.5" r="1.2" fill="#3a8fc0"/><rect x="16.3" y="108.6" width="39.5" height="45.2" fill="#7fb2d4"/><g fill="none" stroke="#fff" stroke-linecap="round" stroke-linejoin="round"><circle cx="33" cy="118.5" r="4.3" fill="#fff" stroke="none"/><path d="M31 124 C29 130 28 134 27 138 L21 150 M27 138 L31 150" stroke-width="4"/><path d="M31 127 L38 132 L43 128" stroke-width="3"/><path d="M39 113 L44 128" stroke-width="3"/></g><rect x="107.4" y="112" width="36.9" height="44.3" fill="#1f4a6c"/><g fill="none" stroke="#fff" stroke-linecap="round" stroke-linejoin="round"><circle cx="133" cy="121" r="3.2" fill="#fff" stroke="none"/><path d="M130 126 L124 138 L117 141 L113 141 M124 138 L130 144 L128 152" stroke-width="3"/><path d="M119 131 L126 127 L133 131 L141 127" stroke-width="2.4"/><path d="M110 133 H117 M111 136 H118" stroke-width=".8"/></g><rect x="56.2" y="187.5" width="58.2" height="63.7" fill="#c6dff0"/><path d="M71 234 C71 226 78 224 88 226 L98 230 L98 242 C88 245 76 245 71 240 Z" fill="#1f3763"/><clipPath id="swc"><path d="M68 212 C67 204 74 200 82 202 L88 208 L88 230 C80 233 71 232 69 226 Z"/></clipPath><path d="M68 212 C67 204 74 200 82 202 L88 208 L88 230 C80 233 71 232 69 226 Z" fill="#e6eef6"/><g clip-path="url(#swc)" stroke="#3e6aa6" stroke-width="1.5" fill="none"><path d="M64 205 L90 208 M64 209.5 L90 212.5 M64 214 L90 217 M64 218.5 L90 221.5 M64 223 L90 226 M64 227.5 L90 230.5"/></g><path d="M84 206 C94 203 101 210 101 222 L100 237 L93 237 L90 222 Z" fill="#1f3763"/><path d="M80 221 C86 219 93 222 97 226 L95 229 C90 227 84 226 80 226 Z" fill="#2a4676"/><circle cx="96" cy="227" r="1.6" fill="#e0b8a0"/><path d="M80 204 C80 196 88 193 96 195 C103 197 104 204 101 210 C99 207 96 205 92 205 C88 206 85 209 83 211 Z" fill="#7b4b33"/><path d="M90 240 C93 238 96 240 98 242 L90 243 Z M98 238 C101 237 104 239 106 242 L98 242 Z" fill="#111"/></svg>
<div class="t" style="left:212.4px;top:335.87px;font-family:'Liberation Sans',sans-serif;font-size:9.6px;font-weight:700;color:#000;letter-spacing:0px;-webkit-text-stroke:0.25px #000">СИСТЕМА БЕЗПЕКИ І ЗВ'ЯЗКУ</div>
<div class="t" style="left:212.4px;top:347.47px;font-family:'Liberation Sans',sans-serif;font-size:9.6px;font-weight:700;color:#000;letter-spacing:0px;-webkit-text-stroke:0.25px #000">З ІНШИМИ.</div>
<div class="t" style="left:212.4px;top:359.17px;font-family:'Liberation Sans',sans-serif;font-size:9.6px;font-weight:700;color:#000;letter-spacing:0px;-webkit-text-stroke:0.25px #000">Вентральний ВАГУС</div>
<svg style="left:213.6px;top:374.2px" width="3" height="3"><circle cx="1.5" cy="1.5" r="1.2" fill="#111"/></svg>
<div class="t" style="left:221.6px;top:370.36px;font-family:'Liberation Serif',serif;font-size:9.6px;font-weight:400;color:#000;letter-spacing:0px;-webkit-text-stroke:0.12px #000">Здоров’я, зріст, відновлення</div>
<svg style="left:213.6px;top:385.8px" width="3" height="3"><circle cx="1.5" cy="1.5" r="1.2" fill="#111"/></svg>
<div class="t" style="left:221.6px;top:381.96px;font-family:'Liberation Serif',serif;font-size:9.6px;font-weight:400;color:#000;letter-spacing:0px;-webkit-text-stroke:0.12px #000">Індивідуальна та інтерактивна</div>
<div class="t" style="left:221.6px;top:393.56px;font-family:'Liberation Serif',serif;font-size:9.6px;font-weight:400;color:#000;letter-spacing:0px;-webkit-text-stroke:0.12px #000">регуляція</div>
<svg style="left:213.6px;top:409.1px" width="3" height="3"><circle cx="1.5" cy="1.5" r="1.2" fill="#111"/></svg>
<div class="t" style="left:221.6px;top:405.26px;font-family:'Liberation Serif',serif;font-size:9.6px;font-weight:400;color:#000;letter-spacing:0px;-webkit-text-stroke:0.12px #000">Комунікація, соціальна</div>
<div class="t" style="left:221.6px;top:416.56px;font-family:'Liberation Serif',serif;font-size:9.6px;font-weight:400;color:#000;letter-spacing:0px;-webkit-text-stroke:0.12px #000">залученість</div>
<div class="t" style="left:213.0px;top:431.96px;font-family:'Liberation Serif',serif;font-size:9.6px;font-weight:700;color:#000;letter-spacing:0px;-webkit-text-stroke:0.25px #000">СИМПАТИЧНА НЕРВОВА</div>
<div class="t" style="left:213.0px;top:443.36px;font-family:'Liberation Serif',serif;font-size:9.6px;font-weight:700;color:#000;letter-spacing:0px;-webkit-text-stroke:0.25px #000">СИСТЕМА</div>
<div class="t" style="left:213.0px;top:454.96px;font-family:'Liberation Serif',serif;font-size:9.6px;font-weight:400;color:#000;letter-spacing:0px;-webkit-text-stroke:0.12px #000">Система мобілізації</div>
<svg style="left:214.0px;top:470.5px" width="3" height="3"><circle cx="1.5" cy="1.5" r="1.2" fill="#111"/></svg>
<div class="t" style="left:222.0px;top:466.66px;font-family:'Liberation Serif',serif;font-size:9.6px;font-weight:400;color:#000;letter-spacing:0px;-webkit-text-stroke:0.12px #000">Адаптивний захист за допомогою</div>
<div class="t" style="left:222.0px;top:477.96px;font-family:'Liberation Serif',serif;font-size:9.6px;font-weight:400;color:#000;letter-spacing:0px;-webkit-text-stroke:0.12px #000">дії</div>
<svg style="left:214.0px;top:493.6px" width="3" height="3"><circle cx="1.5" cy="1.5" r="1.2" fill="#111"/></svg>
<div class="t" style="left:222.0px;top:489.76px;font-family:'Liberation Serif',serif;font-size:9.6px;font-weight:400;color:#000;letter-spacing:0px;-webkit-text-stroke:0.12px #000">Страх, гнів, агресія, активна втеча</div>
<div class="t" style="left:213.0px;top:505.86px;font-family:'Liberation Serif',serif;font-size:9.6px;font-weight:700;color:#000;letter-spacing:0px;-webkit-text-stroke:0.25px #000">ДОРСАЛЬНИЙ ВАГАЛЬНИЙ</div>
<div class="t" style="left:213.0px;top:517.56px;font-family:'Liberation Serif',serif;font-size:9.6px;font-weight:700;color:#000;letter-spacing:0px;-webkit-text-stroke:0.25px #000">КОМПЛЕКС (ДВК)</div>
<svg style="left:214.0px;top:533.0px" width="3" height="3"><circle cx="1.5" cy="1.5" r="1.2" fill="#111"/></svg>
<div class="t" style="left:222.0px;top:529.16px;font-family:'Liberation Serif',serif;font-size:9.6px;font-weight:400;color:#000;letter-spacing:0px;-webkit-text-stroke:0.12px #000">Адаптивний захист за допомогою</div>
<div class="t" style="left:222.0px;top:540.56px;font-family:'Liberation Serif',serif;font-size:9.6px;font-weight:400;color:#000;letter-spacing:0px;-webkit-text-stroke:0.12px #000">зникнення (удавання смертю)</div>
<svg style="left:214.0px;top:556.1px" width="3" height="3"><circle cx="1.5" cy="1.5" r="1.2" fill="#111"/></svg>
<div class="t" style="left:222.0px;top:552.26px;font-family:'Liberation Serif',serif;font-size:9.6px;font-weight:400;color:#000;letter-spacing:0px;-webkit-text-stroke:0.12px #000">Консервація енергії та ресурсів</div>
<svg style="left:214.0px;top:567.8px" width="3" height="3"><circle cx="1.5" cy="1.5" r="1.2" fill="#111"/></svg>
<div class="t" style="left:222.0px;top:563.96px;font-family:'Liberation Serif',serif;font-size:9.6px;font-weight:400;color:#000;letter-spacing:0px;-webkit-text-stroke:0.12px #000">Втрата свідомості</div>
<svg style="left:214.0px;top:579.7px" width="3" height="3"><circle cx="1.5" cy="1.5" r="1.2" fill="#111"/></svg>
<div class="t" style="left:222.0px;top:575.86px;font-family:'Liberation Serif',serif;font-size:9.6px;font-weight:400;color:#000;letter-spacing:0px;-webkit-text-stroke:0.12px #000">Емоційне та фізіологічне</div>
<div class="t" style="left:222.0px;top:587.16px;font-family:'Liberation Serif',serif;font-size:9.6px;font-weight:400;color:#000;letter-spacing:0px;-webkit-text-stroke:0.12px #000">відключення</div>
<div class="t" style="left:531.4px;top:336.08px;font-family:'Liberation Serif',serif;font-size:12.8px;font-weight:700;color:#000;letter-spacing:0px;">Нейроцепція безпеки</div>
<svg style="left:532.0px;top:355.2px" width="3" height="3"><circle cx="1.5" cy="1.5" r="1.2" fill="#111"/></svg>
<div class="t" style="left:540.0px;top:351.36px;font-family:'Liberation Serif',serif;font-size:9.6px;font-weight:400;color:#000;letter-spacing:0px;-webkit-text-stroke:0.12px #000">Соціальний</div>
<svg style="left:532.0px;top:366.8px" width="3" height="3"><circle cx="1.5" cy="1.5" r="1.2" fill="#111"/></svg>
<div class="t" style="left:540.0px;top:362.96px;font-family:'Liberation Serif',serif;font-size:9.6px;font-weight:400;color:#000;letter-spacing:0px;-webkit-text-stroke:0.12px #000">Залучений</div>
<svg style="left:532.0px;top:378.2px" width="3" height="3"><circle cx="1.5" cy="1.5" r="1.2" fill="#111"/></svg>
<div class="t" style="left:540.0px;top:374.36px;font-family:'Liberation Serif',serif;font-size:9.6px;font-weight:400;color:#000;letter-spacing:0px;-webkit-text-stroke:0.12px #000">Пов’язаний з іншими</div>
<svg style="left:532.0px;top:389.7px" width="3" height="3"><circle cx="1.5" cy="1.5" r="1.2" fill="#111"/></svg>
<div class="t" style="left:540.0px;top:385.86px;font-family:'Liberation Serif',serif;font-size:9.6px;font-weight:400;color:#000;letter-spacing:0px;-webkit-text-stroke:0.12px #000">Доступ до навиків і талантів</div>
<div class="t" style="left:531.4px;top:433.08px;font-family:'Liberation Serif',serif;font-size:12.8px;font-weight:700;color:#d9332a;letter-spacing:0px;">Нейроцепція небезпеки</div>
<svg style="left:532.0px;top:451.4px" width="3" height="3"><circle cx="1.5" cy="1.5" r="1.2" fill="#111"/></svg>
<div class="t" style="left:540.0px;top:447.56px;font-family:'Liberation Serif',serif;font-size:9.6px;font-weight:400;color:#000;letter-spacing:0px;-webkit-text-stroke:0.12px #000">Мобілізований</div>
<svg style="left:532.0px;top:463.0px" width="3" height="3"><circle cx="1.5" cy="1.5" r="1.2" fill="#111"/></svg>
<div class="t" style="left:540.0px;top:459.16px;font-family:'Liberation Serif',serif;font-size:9.6px;font-weight:400;color:#000;letter-spacing:0px;-webkit-text-stroke:0.12px #000">Діючий</div>
<svg style="left:532.0px;top:474.7px" width="3" height="3"><circle cx="1.5" cy="1.5" r="1.2" fill="#111"/></svg>
<div class="t" style="left:540.0px;top:470.86px;font-family:'Liberation Serif',serif;font-size:9.6px;font-weight:400;color:#000;letter-spacing:0px;-webkit-text-stroke:0.12px #000">Атакуючий або втікаючий</div>
<div class="t" style="left:531.4px;top:505.86px;font-family:'Liberation Serif',serif;font-size:9.6px;font-weight:700;color:#000;letter-spacing:0px;-webkit-text-stroke:0.25px #000">НЕЙРОЦЕПЦІЯ ЗАГРОЗИ</div>
<div class="t" style="left:531.4px;top:517.56px;font-family:'Liberation Serif',serif;font-size:9.6px;font-weight:700;color:#000;letter-spacing:0px;-webkit-text-stroke:0.25px #000">ЖИТТЮ</div>
<svg style="left:532.0px;top:532.7px" width="3" height="3"><circle cx="1.5" cy="1.5" r="1.2" fill="#111"/></svg>
<div class="t" style="left:540.0px;top:528.86px;font-family:'Liberation Serif',serif;font-size:9.6px;font-weight:400;color:#000;letter-spacing:0px;-webkit-text-stroke:0.12px #000">Іммобілізований</div>
<svg style="left:532.0px;top:544.2px" width="3" height="3"><circle cx="1.5" cy="1.5" r="1.2" fill="#111"/></svg>
<div class="t" style="left:540.0px;top:540.36px;font-family:'Liberation Serif',serif;font-size:9.6px;font-weight:400;color:#000;letter-spacing:0px;-webkit-text-stroke:0.12px #000">Відключений</div>
<svg style="left:532.0px;top:555.6px" width="3" height="3"><circle cx="1.5" cy="1.5" r="1.2" fill="#111"/></svg>
<div class="t" style="left:540.0px;top:551.76px;font-family:'Liberation Serif',serif;font-size:9.6px;font-weight:400;color:#000;letter-spacing:0px;-webkit-text-stroke:0.12px #000">В колапсі</div>
<svg style="left:222px;top:425.3px" width="47.0" height="3"><path d="M0 1.5 L1.5 0.5 L3.0 2.5 L4.5 0.5 L6.0 2.5 L7.5 0.5 L9.0 2.5 L10.5 0.5 L12.0 2.5 L13.5 0.5 L15.0 2.5 L16.5 0.5 L18.0 2.5 L19.5 0.5 L21.0 2.5 L22.5 0.5 L24.0 2.5 L25.5 0.5 L27.0 2.5 L28.5 0.5 L30.0 2.5 L31.5 0.5 L33.0 2.5 L34.5 0.5 L36.0 2.5 L37.5 0.5 L39.0 2.5 L40.5 0.5 L42.0 2.5 L43.5 0.5 L45.0 2.5 L46.5 0.5" fill="none" stroke="#d9463e" stroke-width=".7"/></svg>
<svg style="left:531.4px;top:347.8px" width="76.1" height="3"><path d="M0 1.5 L1.5 0.5 L3.0 2.5 L4.5 0.5 L6.0 2.5 L7.5 0.5 L9.0 2.5 L10.5 0.5 L12.0 2.5 L13.5 0.5 L15.0 2.5 L16.5 0.5 L18.0 2.5 L19.5 0.5 L21.0 2.5 L22.5 0.5 L24.0 2.5 L25.5 0.5 L27.0 2.5 L28.5 0.5 L30.0 2.5 L31.5 0.5 L33.0 2.5 L34.5 0.5 L36.0 2.5 L37.5 0.5 L39.0 2.5 L40.5 0.5 L42.0 2.5 L43.5 0.5 L45.0 2.5 L46.5 0.5 L48.0 2.5 L49.5 0.5 L51.0 2.5 L52.5 0.5 L54.0 2.5 L55.5 0.5 L57.0 2.5 L58.5 0.5 L60.0 2.5 L61.5 0.5 L63.0 2.5 L64.5 0.5 L66.0 2.5 L67.5 0.5 L69.0 2.5 L70.5 0.5 L72.0 2.5 L73.5 0.5 L75.0 2.5" fill="none" stroke="#d9463e" stroke-width=".7"/></svg>
<svg style="left:606px;top:479.6px" width="42.6" height="3"><path d="M0 1.5 L1.5 0.5 L3.0 2.5 L4.5 0.5 L6.0 2.5 L7.5 0.5 L9.0 2.5 L10.5 0.5 L12.0 2.5 L13.5 0.5 L15.0 2.5 L16.5 0.5 L18.0 2.5 L19.5 0.5 L21.0 2.5 L22.5 0.5 L24.0 2.5 L25.5 0.5 L27.0 2.5 L28.5 0.5 L30.0 2.5 L31.5 0.5 L33.0 2.5 L34.5 0.5 L36.0 2.5 L37.5 0.5 L39.0 2.5 L40.5 0.5 L42.0 2.5" fill="none" stroke="#d9463e" stroke-width=".7"/></svg>
<div class="a" style="left:87px;top:311px;width:68px;height:17px;background:#d3e4f5;"></div>
<div class="a" style="left:90px;top:313.0px;width:14px;height:0.6000000000000227px;background:#8a9ab4;"></div>
<div class="a" style="left:90px;top:315.3px;width:11px;height:0.5999999999999659px;background:#8a9ab4;"></div>
<div class="a" style="left:90px;top:317.6px;width:13px;height:0.5999999999999659px;background:#8a9ab4;"></div>
<div class="a" style="left:90px;top:319.9px;width:9px;height:0.6000000000000227px;background:#8a9ab4;"></div>
<div class="a" style="left:90px;top:322.2px;width:14px;height:0.6000000000000227px;background:#8a9ab4;"></div>
<div class="a" style="left:90px;top:324.5px;width:11px;height:0.6000000000000227px;background:#8a9ab4;"></div>
<div class="a" style="left:106px;top:313.0px;width:14px;height:0.6000000000000227px;background:#8a9ab4;"></div>
<div class="a" style="left:106px;top:315.3px;width:11px;height:0.5999999999999659px;background:#8a9ab4;"></div>
<div class="a" style="left:106px;top:317.6px;width:13px;height:0.5999999999999659px;background:#8a9ab4;"></div>
<div class="a" style="left:106px;top:319.9px;width:9px;height:0.6000000000000227px;background:#8a9ab4;"></div>
<div class="a" style="left:106px;top:322.2px;width:14px;height:0.6000000000000227px;background:#8a9ab4;"></div>
<div class="a" style="left:106px;top:324.5px;width:11px;height:0.6000000000000227px;background:#8a9ab4;"></div>
<div class="a" style="left:122px;top:313.0px;width:14px;height:0.6000000000000227px;background:#8a9ab4;"></div>
<div class="a" style="left:122px;top:315.3px;width:11px;height:0.5999999999999659px;background:#8a9ab4;"></div>
<div class="a" style="left:122px;top:317.6px;width:13px;height:0.5999999999999659px;background:#8a9ab4;"></div>
<div class="a" style="left:122px;top:319.9px;width:9px;height:0.6000000000000227px;background:#8a9ab4;"></div>
<div class="a" style="left:122px;top:322.2px;width:14px;height:0.6000000000000227px;background:#8a9ab4;"></div>
<div class="a" style="left:122px;top:324.5px;width:11px;height:0.6000000000000227px;background:#8a9ab4;"></div>
<div class="a" style="left:138px;top:313.0px;width:14px;height:0.6000000000000227px;background:#8a9ab4;"></div>
<div class="a" style="left:138px;top:315.3px;width:11px;height:0.5999999999999659px;background:#8a9ab4;"></div>
<div class="a" style="left:138px;top:317.6px;width:13px;height:0.5999999999999659px;background:#8a9ab4;"></div>
<div class="a" style="left:138px;top:319.9px;width:9px;height:0.6000000000000227px;background:#8a9ab4;"></div>
<div class="a" style="left:138px;top:322.2px;width:14px;height:0.6000000000000227px;background:#8a9ab4;"></div>
<div class="a" style="left:138px;top:324.5px;width:11px;height:0.6000000000000227px;background:#8a9ab4;"></div>
<div class="t" style="left:76.0px;top:337.50px;font-family:'Liberation Sans',sans-serif;font-size:6.5px;font-weight:400;color:#555;letter-spacing:-0.2px;">10</div>
<div class="t" style="left:76.0px;top:385.50px;font-family:'Liberation Sans',sans-serif;font-size:6.5px;font-weight:400;color:#555;letter-spacing:-0.2px;">11</div>
<div class="t" style="left:76.0px;top:433.50px;font-family:'Liberation Sans',sans-serif;font-size:6.5px;font-weight:400;color:#555;letter-spacing:-0.2px;">12</div>
<div class="t" style="left:76.0px;top:480.50px;font-family:'Liberation Sans',sans-serif;font-size:6.5px;font-weight:400;color:#555;letter-spacing:-0.2px;">13</div>
<div class="t" style="left:76.0px;top:526.50px;font-family:'Liberation Sans',sans-serif;font-size:6.5px;font-weight:400;color:#555;letter-spacing:-0.2px;">14</div>
<div class="t" style="left:76.0px;top:574.50px;font-family:'Liberation Sans',sans-serif;font-size:6.5px;font-weight:400;color:#555;letter-spacing:-0.2px;">15</div>
<div class="t" style="left:76.0px;top:622.50px;font-family:'Liberation Sans',sans-serif;font-size:6.5px;font-weight:400;color:#555;letter-spacing:-0.2px;">16</div>
<div class="t" style="left:76.0px;top:547.50px;font-family:'Liberation Sans',sans-serif;font-size:6.5px;font-weight:400;color:#333;letter-spacing:0px;">★</div>
<div class="t" style="left:76.0px;top:350.50px;font-family:'Liberation Sans',sans-serif;font-size:6.5px;font-weight:400;color:#333;letter-spacing:0px;">★</div>
<div class="a" style="left:87px;top:337px;width:68px;height:37.5px;background:#fff;"></div>
<svg style="left:87px;top:337px" width="68" height="6" viewBox="0 0 68 6" preserveAspectRatio="none"><path d="M0 3 C20 0 45 5 68 1" stroke="#e8b9a0" stroke-width="1.2" fill="none"/><path d="M0 4 C20 1 45 6 68 2" stroke="#a9d4e4" stroke-width="1.2" fill="none"/><path d="M0 5 C20 2 45 7 68 3" stroke="#d8d0e8" stroke-width="1" fill="none"/></svg>
<div class="a" style="left:100px;top:346px;width:42px;height:0.6999999999999886px;background:#9aa2c0;"></div>
<div class="a" style="left:113px;top:350px;width:17px;height:1px;background:#e87070;"></div>
<div class="a" style="left:110px;top:353px;width:23px;height:0.8000000000000114px;background:#7a9ae0;"></div>
<div class="a" style="left:97px;top:356px;width:49px;height:0.6999999999999886px;background:#8890a0;"></div>
<div class="a" style="left:106px;top:359.5px;width:31px;height:0.6999999999999886px;background:#9098a8;"></div>
<div class="a" style="left:99px;top:364px;width:9px;height:5px;border-radius:5px 5px 2px 2px;background:#dcb4b0"></div>
<div class="a" style="left:114px;top:364px;width:9px;height:5px;border-radius:5px 5px 2px 2px;background:#dcb4b0"></div>
<div class="a" style="left:130px;top:364px;width:9px;height:5px;border-radius:5px 5px 2px 2px;background:#dcb4b0"></div>
<div class="a" style="left:87px;top:384.5px;width:68px;height:38.5px;background:#fff;"></div>
<svg style="left:87px;top:384.5px" width="68" height="6" viewBox="0 0 68 6" preserveAspectRatio="none"><path d="M0 3 C20 0 45 5 68 1" stroke="#e8b9a0" stroke-width="1.2" fill="none"/><path d="M0 4 C20 1 45 6 68 2" stroke="#a9d4e4" stroke-width="1.2" fill="none"/><path d="M0 5 C20 2 45 7 68 3" stroke="#d8d0e8" stroke-width="1" fill="none"/></svg>
<div class="a" style="left:114px;top:389.5px;width:15px;height:1.5px;background:#ec8a8a;"></div>
<div class="a" style="left:92px;top:393.5px;width:24px;height:1.5px;background:#f0c0c0;"></div>
<div class="a" style="left:125px;top:393.5px;width:24px;height:1.5px;background:#c0d0ea;"></div>
<div class="a" style="left:120px;top:392.5px;width:0.5999999999999943px;height:28.0px;background:#aaa;"></div>
<div class="a" style="left:90px;top:397.5px;width:24px;height:0.6000000000000227px;background:#eb8a8a;"></div>
<div class="a" style="left:90px;top:399.8px;width:18px;height:0.5999999999999659px;background:#eb8a8a;"></div>
<div class="a" style="left:90px;top:402.1px;width:20px;height:0.5999999999999659px;background:#eb8a8a;"></div>
<div class="a" style="left:90px;top:404.4px;width:26px;height:0.6000000000000227px;background:#eb8a8a;"></div>
<div class="a" style="left:90px;top:406.7px;width:16px;height:0.6000000000000227px;background:#eb8a8a;"></div>
<div class="a" style="left:90px;top:409.0px;width:24px;height:0.6000000000000227px;background:#eb8a8a;"></div>
<div class="a" style="left:90px;top:411.3px;width:18px;height:0.5999999999999659px;background:#eb8a8a;"></div>
<div class="a" style="left:90px;top:413.6px;width:20px;height:0.5999999999999659px;background:#eb8a8a;"></div>
<div class="a" style="left:90px;top:415.9px;width:26px;height:0.6000000000000227px;background:#eb8a8a;"></div>
<div class="a" style="left:125px;top:397.5px;width:20px;height:0.6000000000000227px;background:#999;"></div>
<div class="a" style="left:125px;top:399.8px;width:16px;height:0.5999999999999659px;background:#999;"></div>
<div class="a" style="left:125px;top:402.1px;width:22px;height:0.5999999999999659px;background:#999;"></div>
<div class="a" style="left:125px;top:404.4px;width:20px;height:0.6000000000000227px;background:#999;"></div>
<div class="a" style="left:125px;top:409.5px;width:22px;height:0.6000000000000227px;background:#8ac08a;"></div>
<div class="a" style="left:125px;top:411.8px;width:18px;height:0.5999999999999659px;background:#8ac08a;"></div>
<div class="a" style="left:125px;top:414.1px;width:14px;height:0.5999999999999659px;background:#8ac08a;"></div>
<div class="a" style="left:125px;top:417.5px;width:15px;height:2.0px;background:#a8b8e0;"></div>
<div class="a" style="left:87px;top:432px;width:68px;height:38px;background:#fff;"></div>
<svg style="left:87px;top:432px" width="68" height="6" viewBox="0 0 68 6" preserveAspectRatio="none"><path d="M0 3 C20 0 45 5 68 1" stroke="#e8b9a0" stroke-width="1.2" fill="none"/><path d="M0 4 C20 1 45 6 68 2" stroke="#a9d4e4" stroke-width="1.2" fill="none"/><path d="M0 5 C20 2 45 7 68 3" stroke="#d8d0e8" stroke-width="1" fill="none"/></svg>
<div class="a" style="left:91px;top:436px;width:24px;height:25px;background:#5a4a40;"></div>
<div class="a" style="left:98px;top:440px;width:10px;height:12px;border-radius:5px;background:#c9a489"></div>
<div class="a" style="left:96px;top:452px;width:15px;height:9px;background:#e8e8ee;"></div>
<div class="a" style="left:119px;top:438.0px;width:28px;height:0.6000000000000227px;background:#7a82a0;"></div>
<div class="a" style="left:119px;top:440.3px;width:24px;height:0.5999999999999659px;background:#7a82a0;"></div>
<div class="a" style="left:119px;top:442.6px;width:30px;height:0.5999999999999659px;background:#7a82a0;"></div>
<div class="a" style="left:119px;top:444.9px;width:20px;height:0.6000000000000227px;background:#7a82a0;"></div>
<div class="a" style="left:119px;top:447.2px;width:26px;height:0.6000000000000227px;background:#7a82a0;"></div>
<div class="a" style="left:119px;top:449.5px;width:22px;height:0.6000000000000227px;background:#7a82a0;"></div>
<div class="a" style="left:119px;top:451.8px;width:28px;height:0.5999999999999659px;background:#7a82a0;"></div>
<div class="a" style="left:119px;top:454.1px;width:24px;height:0.5999999999999659px;background:#7a82a0;"></div>
<div class="a" style="left:119px;top:456.4px;width:30px;height:0.6000000000000227px;background:#7a82a0;"></div>
<div class="a" style="left:119px;top:458.7px;width:20px;height:0.6000000000000227px;background:#7a82a0;"></div>
<div class="a" style="left:119px;top:461.0px;width:26px;height:0.6000000000000227px;background:#7a82a0;"></div>
<div class="a" style="left:119px;top:463.3px;width:22px;height:0.5999999999999659px;background:#7a82a0;"></div>
<svg style="left:140px;top:447px" width="6" height="8"><path d="M1 1 L1 7 L2.5 5.5 L4 8 L5 7.5 L3.8 5 L5.8 5 Z" fill="#111"/></svg>
<div class="a" style="left:87px;top:479.5px;width:68px;height:38.0px;background:#fff;"></div>
<svg style="left:87px;top:479.5px" width="68" height="6" viewBox="0 0 68 6" preserveAspectRatio="none"><path d="M0 3 C20 0 45 5 68 1" stroke="#e8b9a0" stroke-width="1.2" fill="none"/><path d="M0 4 C20 1 45 6 68 2" stroke="#a9d4e4" stroke-width="1.2" fill="none"/><path d="M0 5 C20 2 45 7 68 3" stroke="#d8d0e8" stroke-width="1" fill="none"/></svg>
<div class="a" style="left:112px;top:483.5px;width:18px;height:3.0px;background:#e0503c;"></div>
<div class="a" style="left:96px;top:491.5px;width:52px;height:1.1999999999999886px;background:#2340a0;"></div>
<div class="a" style="left:105px;top:495.5px;width:19px;height:1.1999999999999886px;background:#2340a0;"></div>
<div class="a" style="left:125px;top:495.5px;width:12px;height:1.1999999999999886px;background:#e0303c;"></div>
<div class="a" style="left:85px;top:525px;width:72px;height:41.5px;background:#fff;border:2px solid #c8502f;border-radius:2px"></div>
<div class="a" style="left:91px;top:529px;width:60px;height:2px;background:#b6b6b6;"></div>
<div class="a" style="left:91px;top:531px;width:20px;height:12px;background:#88b970;"></div>
<div class="a" style="left:91px;top:543px;width:20px;height:9px;background:#f5c244;"></div>
<div class="a" style="left:91px;top:552px;width:20px;height:11px;background:#7fa3d0;"></div>
<div class="a" style="left:111px;top:531px;width:20px;height:12px;background:#c9c9c9;"></div>
<div class="a" style="left:111px;top:543px;width:20px;height:20px;background:#e6e6e6;"></div>
<div class="a" style="left:131px;top:531px;width:20px;height:12px;background:#88b970;"></div>
<div class="a" style="left:131px;top:543px;width:20px;height:9px;background:#f5c244;"></div>
<div class="a" style="left:131px;top:552px;width:20px;height:11px;background:#7fa3d0;"></div>
<div class="a" style="left:117px;top:533px;width:1px;height:29px;background:#7a4a2c;"></div>
<div class="a" style="left:124px;top:532px;width:1px;height:30px;background:#7a4a2c;"></div>
<div class="a" style="left:116px;top:537px;width:10px;height:1px;background:#7a4a2c;"></div>
<div class="a" style="left:116px;top:542px;width:10px;height:1px;background:#7a4a2c;"></div>
<div class="a" style="left:116px;top:548px;width:10px;height:1px;background:#7a4a2c;"></div>
<div class="a" style="left:116px;top:554px;width:10px;height:1px;background:#7a4a2c;"></div>
<div class="a" style="left:116px;top:558px;width:10px;height:1px;background:#7a4a2c;"></div>
<div class="a" style="left:118px;top:533px;width:5px;height:6px;background:#fff;"></div>
<div class="a" style="left:119px;top:535px;width:3px;height:3px;background:#ef7a2a;"></div>
<div class="a" style="left:113px;top:546px;width:4px;height:5px;background:#7fb2d4;"></div>
<div class="a" style="left:124px;top:546px;width:4px;height:5px;background:#1f4a6c;"></div>
<div class="a" style="left:117px;top:555px;width:7px;height:7px;background:#c6dff0;"></div>
<div class="a" style="left:92px;top:533.0px;width:14px;height:0.6000000000000227px;background:#333;"></div>
<div class="a" style="left:92px;top:535.5px;width:10px;height:0.6000000000000227px;background:#333;"></div>
<div class="a" style="left:92px;top:538.0px;width:16px;height:0.6000000000000227px;background:#333;"></div>
<div class="a" style="left:132px;top:533.0px;width:14px;height:0.6000000000000227px;background:#333;"></div>
<div class="a" style="left:132px;top:535.5px;width:10px;height:0.6000000000000227px;background:#333;"></div>
<div class="a" style="left:132px;top:538.0px;width:16px;height:0.6000000000000227px;background:#333;"></div>
<div class="a" style="left:87px;top:574px;width:68px;height:38.5px;background:#fff;"></div>
<svg style="left:87px;top:574px" width="68" height="6" viewBox="0 0 68 6" preserveAspectRatio="none"><path d="M0 3 C20 0 45 5 68 1" stroke="#e8b9a0" stroke-width="1.2" fill="none"/><path d="M0 4 C20 1 45 6 68 2" stroke="#a9d4e4" stroke-width="1.2" fill="none"/><path d="M0 5 C20 2 45 7 68 3" stroke="#d8d0e8" stroke-width="1" fill="none"/></svg>
<div class="a" style="left:106px;top:578px;width:30px;height:6px;border-radius:50%;background:#9bc0e8"></div>
<div class="a" style="left:112px;top:586px;width:18px;height:6px;border-radius:50%;background:#9bc0e8"></div>
<svg style="left:87px;top:590px" width="68" height="20"><path d="M34 3 L14 9 M34 3 V9 M34 3 L54 9 M34 12 V16" stroke="#888" stroke-width=".6"/></svg>
<div class="a" style="left:98px;top:595px;width:14px;height:5px;border-radius:50%;background:#9fd88a"></div>
<div class="a" style="left:114px;top:595px;width:14px;height:5px;border-radius:50%;background:#f3ec6a"></div>
<div class="a" style="left:131px;top:595px;width:14px;height:5px;border-radius:50%;background:#e03a3a"></div>
<div class="a" style="left:95px;top:601px;width:19px;height:5px;background:#5cc04a;"></div>
<div class="a" style="left:129px;top:601px;width:19px;height:5px;background:#e03a3a;"></div>
<div class="a" style="left:110px;top:607px;width:20px;height:3px;background:#f5e04a;"></div>
<div class="a" style="left:87px;top:621px;width:68px;height:19px;background:#fff;"></div>
<svg style="left:87px;top:621px" width="68" height="6" viewBox="0 0 68 6" preserveAspectRatio="none"><path d="M0 3 C20 0 45 5 68 1" stroke="#e8b9a0" stroke-width="1.2" fill="none"/><path d="M0 4 C20 1 45 6 68 2" stroke="#a9d4e4" stroke-width="1.2" fill="none"/><path d="M0 5 C20 2 45 7 68 3" stroke="#d8d0e8" stroke-width="1" fill="none"/></svg>
<div class="a" style="left:89px;top:623px;width:25px;height:17px;background:#111;"></div>
<div class="a" style="left:97px;top:625px;width:8px;height:12px;border-radius:4px;background:#6a7a8a;opacity:.7"></div>
<div class="a" style="left:118px;top:628px;width:30px;height:1px;background:#7aa0d0;"></div>
<div class="a" style="left:125px;top:631px;width:15px;height:1px;background:#e04040;"></div>

<div class="a" style="left:714px;top:234px;width:119px;height:133px;background:#111;"></div>
<svg style="left:714px;top:234px" width="119" height="133" viewBox="0 0 119 133"><defs><filter id="vb" x="-20%" y="-20%" width="140%" height="140%"><feGaussianBlur stdDeviation="1.5"/></filter><linearGradient id="bg1" x1="0" y1="0" x2="1" y2="0"><stop offset="0" stop-color="#e6e4df"/><stop offset="1" stop-color="#dad7d0"/></linearGradient></defs><rect width="119" height="133" fill="url(#bg1)"/><g filter="url(#vb)"><ellipse cx="40" cy="14" rx="13" ry="12" fill="#bba98e"/><ellipse cx="46" cy="46" rx="28" ry="20" fill="#726b5d"/><path d="M64 48 C72 58 72 72 68 80 L60 70 Z" fill="#7a7262"/><path d="M22 40 C30 30 55 28 68 45" stroke="#a59c8a" stroke-width="3" fill="none"/><ellipse cx="38" cy="80" rx="28" ry="29" fill="#d6b0a2"/><ellipse cx="66" cy="84" rx="6" ry="10" fill="#cf9d8c"/><path d="M66 92 C80 95 100 98 119 108 V133 H60 Z" fill="#3e4359"/><path d="M58 92 L70 92 L78 133 L62 133 Z" fill="#2b2f40"/><path d="M8 114 L66 110 L70 133 L4 133 Z" fill="#dcdce0"/><path d="M0 102 C8 94 22 96 34 104 L36 118 L20 124 L0 126 Z" fill="#cf9a88"/></g><clipPath id="shc"><path d="M8 112 L64 108 L68 133 L4 133 Z"/></clipPath><g clip-path="url(#shc)" stroke="#26262c" stroke-width="2.4" opacity=".9"><path d="M6 110 L1 133 M11 110 L6 133 M16 110 L11 133 M21 110 L16 133 M26 110 L21 133 M31 110 L26 133 M36 110 L31 133 M41 110 L36 133 M46 110 L41 133 M51 110 L46 133 M56 110 L51 133 M61 110 L56 133 M66 110 L61 133 M71 110 L66 133 M76 110 L71 133"/></g><g fill="none" stroke="#4a2835" stroke-width="1.5" opacity=".75"><path d="M2 76 C8 72 20 72 26 76 L25 88 C20 92 8 92 4 88 Z"/><path d="M30 76 C38 70 52 68 58 72 L56 86 C50 92 36 92 32 88 Z"/><path d="M26 78 L30 78 M58 72 L70 62"/></g><circle cx="64" cy="92" r="1.8" fill="#2d2d6a"/><rect x="8.5" y="101.5" width="27.5" height="20.5" rx="3" fill="rgba(70,48,44,.8)"/></svg>
<svg style="left:729.2px;top:338.4px" width="13.6" height="15.3" viewBox="0 0 16 18"><path d="M5 4 A3 3 0 0 1 11 4 V8.5 A3 3 0 0 1 5.6 10.3" fill="none" stroke="#e8e8e8" stroke-width="1.2"/><path d="M2.5 8 A5.5 5.5 0 0 0 11.5 12.3 M13.5 8 A5.5 5.5 0 0 1 13 10.2 M8 13.5 V17" fill="none" stroke="#e8e8e8" stroke-width="1.2"/><path d="M1.5 1 L14.5 17" stroke="#e8e8e8" stroke-width="1.2"/></svg>
<div class="a" style="left:837px;top:233.5px;width:118px;height:65.5px;background:#7f85f5;"></div>
<div class="a" style="left:841px;top:237.5px;width:110px;height:57.5px;background:#141414;"></div>
<svg style="left:843px;top:239.5px" width="107" height="54" viewBox="0 0 107 54"><defs><filter id="vb2" x="-20%" y="-20%" width="140%" height="140%"><feGaussianBlur stdDeviation="1.8"/></filter><linearGradient id="bg2" x1="0" y1="0" x2="1" y2="0"><stop offset="0" stop-color="#dcc392"/><stop offset=".55" stop-color="#d4bc90"/><stop offset=".78" stop-color="#9aa5b0"/><stop offset="1" stop-color="#8797a8"/></linearGradient></defs><rect width="107" height="54" fill="url(#bg2)"/><g filter="url(#vb2)"><ellipse cx="61" cy="20" rx="16" ry="18" fill="#2e2622"/><path d="M45 20 C42 35 46 45 50 50 L56 40 Z" fill="#2e2622"/><ellipse cx="63" cy="27" rx="11" ry="14" fill="#9b7565"/><path d="M44 8 C50 0 74 0 78 10 L76 18 L46 18 Z" fill="#2a221e"/><path d="M25 54 C30 44 45 42 62 44 C80 44 95 48 100 54 Z" fill="#2b2b2b"/></g><g fill="none" stroke="#3a2a2a" stroke-width="1.2" opacity=".4"><rect x="52" y="22" width="9" height="6" rx="2"/><rect x="64" y="22" width="9" height="6" rx="2"/></g></svg>
<div class="a" style="left:837px;top:302px;width:118px;height:65px;background:#111;"></div>
<svg style="left:837px;top:302.5px" width="118" height="64.5" viewBox="0 0 118 64.5"><defs><filter id="vb3" x="-20%" y="-20%" width="140%" height="140%"><feGaussianBlur stdDeviation="1.3"/></filter></defs><rect width="118" height="64.5" fill="#dedbd6"/><g filter="url(#vb3)"><path d="M0 0 H118 V6 L100 12 H0 Z" fill="#ecebe8"/><rect x="37" y="27" width="44" height="38" fill="#141414"/><rect x="42" y="32" width="34" height="33" fill="#cfc9bf"/><path d="M103 18 L118 10 V64.5 H103 Z" fill="#1a1a1a"/><path d="M106 20 L118 14 V60 H106 Z" fill="#e8ecef"/><ellipse cx="66" cy="22" rx="11" ry="12" fill="#cf5e37"/><ellipse cx="66" cy="33" rx="9" ry="11" fill="#d9b0a6"/><path d="M40 64.5 C42 50 52 44 66 44 C80 44 90 50 92 64.5 Z" fill="#121212"/><path d="M92 64.5 L98 52 L108 50 L110 64.5 Z" fill="#4d5a3f" opacity=".8"/></g><g fill="none" stroke="#3a1f4a" stroke-width="1" opacity=".7"><rect x="57" y="29" width="8" height="5" rx="2"/><rect x="67" y="29" width="8" height="5" rx="2"/></g><rect x="8" y="33" width="27.5" height="23" rx="3.5" fill="rgba(110,110,110,.92)"/></svg>
<svg style="left:851.8px;top:338.4px" width="14.4" height="16.2" viewBox="0 0 16 18"><path d="M5 4 A3 3 0 0 1 11 4 V8.5 A3 3 0 0 1 5.6 10.3" fill="none" stroke="#e6e6e6" stroke-width="1.2"/><path d="M2.5 8 A5.5 5.5 0 0 0 11.5 12.3 M13.5 8 A5.5 5.5 0 0 1 13 10.2 M8 13.5 V17" fill="none" stroke="#e6e6e6" stroke-width="1.2"/><path d="M1.5 1 L14.5 17" stroke="#e6e6e6" stroke-width="1.2"/></svg>
<svg style="left:745px;top:401px" width="70" height="70" viewBox="0 0 70 70"><defs><clipPath id="cav"><circle cx="35" cy="35" r="35"/></clipPath><filter id="vb4"><feGaussianBlur stdDeviation="1.1"/></filter></defs><g clip-path="url(#cav)"><rect width="70" height="70" fill="#cbbcb8"/><g filter="url(#vb4)"><path d="M16 30 C14 12 26 4 38 6 C50 8 57 18 55 34 C54 42 50 46 46 48 L24 52 C18 46 16 40 16 30 Z" fill="#6b4631"/><ellipse cx="36" cy="32" rx="11.5" ry="14" fill="#dcae98"/><path d="M28 44 C30 52 40 56 50 52 L54 60 L24 60 Z" fill="#d6a690"/><path d="M12 60 C18 54 24 52 28 53 C36 58 46 58 52 53 C58 54 64 58 66 60 Z" fill="#2e3750"/></g><rect x="0" y="59" width="70" height="11" fill="#8e9292"/></g></svg>
<div class="t" style="left:734.0px;top:481.94px;font-family:'Liberation Sans',sans-serif;font-size:12px;font-weight:700;color:#f0f0f0;letter-spacing:-0.57px;">Мельніков...</div>
<svg style="left:813.0px;top:481.2px" width="12.0" height="13.5" viewBox="0 0 16 18"><path d="M5 4 A3 3 0 0 1 11 4 V8.5 A3 3 0 0 1 5.6 10.3" fill="none" stroke="#e6e6e6" stroke-width="1.2"/><path d="M2.5 8 A5.5 5.5 0 0 0 11.5 12.3 M13.5 8 A5.5 5.5 0 0 1 13 10.2 M8 13.5 V17" fill="none" stroke="#e6e6e6" stroke-width="1.2"/><path d="M1.5 1 L14.5 17" stroke="#e6e6e6" stroke-width="1.2"/></svg>
<div class="a" style="left:855px;top:401px;width:70px;height:70px;border-radius:35px;background:#141414;border:1px solid #2b2b2b"></div>
<svg style="left:882px;top:434px" width="18" height="5"><g fill="#8a8a8a"><circle cx="2.5" cy="2.5" r="2"/><circle cx="9" cy="2.5" r="2"/><circle cx="15.5" cy="2.5" r="2"/></g></svg>
<div class="t" style="left:854.0px;top:481.94px;font-family:'Liberation Sans',sans-serif;font-size:12px;font-weight:400;color:#565656;letter-spacing:-0.11px;">Увидеть всех</div>
<div class="a" style="left:714px;top:535px;width:241px;height:132.5px;background:#333333;"></div>
<div class="a" style="left:806.8px;top:572.2px;width:57px;height:57px;border-radius:29px;background:#f1d6da"></div>
<div class="t" style="left:806.5px;top:590.75px;font-family:'Liberation Sans',sans-serif;font-size:22.5px;font-weight:400;color:#7a2b36;letter-spacing:0px;width:57px;text-align:center">КЙ</div>
<div class="a" style="left:81px;top:636.5px;width:230px;height:23.0px;background:rgba(0,0,0,.5);border-radius:4px"></div>
<div class="t" style="left:87.5px;top:642.44px;font-family:'Liberation Sans',sans-serif;font-size:12px;font-weight:400;color:#fff;letter-spacing:-0.04px;">Вдовіченко Оксана Володимирівна</div>
<svg style="left:290.2px;top:640.4px" width="13.6" height="15.3" viewBox="0 0 16 18"><path d="M5 4 A3 3 0 0 1 11 4 V8.5 A3 3 0 0 1 5.6 10.3" fill="none" stroke="#fff" stroke-width="1.2"/><path d="M2.5 8 A5.5 5.5 0 0 0 11.5 12.3 M13.5 8 A5.5 5.5 0 0 1 13 10.2 M8 13.5 V17" fill="none" stroke="#fff" stroke-width="1.2"/><path d="M1.5 1 L14.5 17" stroke="#fff" stroke-width="1.2"/></svg>
<div class="a" style="left:320px;top:636.5px;width:65px;height:23.0px;background:rgba(0,0,0,.5);border-radius:4px"></div>
<svg style="left:361px;top:641px" width="14" height="14"><path d="M7 0 V14 M0 7 H14" stroke="#fff" stroke-width="1.3"/></svg>

<!-- ===== RIGHT PANEL ===== -->
<div class="a" style="left:960px;top:228px;width:1px;height:444px;background:#3a3a3a"></div>
<div class="a" style="left:961px;top:228px;width:319px;height:444px;background:#1f1f1f"></div>
<svg style="left:987px;top:255px" width="9" height="13"><path d="M7.5 1 L1.5 6.5 L7.5 12" fill="none" stroke="#d0d0d0" stroke-width="1.3"/></svg>
<div class="t" style="left:1008.4px;top:256.50px;font-family:'Liberation Sans',sans-serif;font-size:13px;font-weight:700;color:#fff;letter-spacing:-0.12px;">В этом с...</div>
<div class="t" style="left:1077.4px;top:256.50px;font-family:'Liberation Sans',sans-serif;font-size:13px;font-weight:400;color:#9e9e9e;letter-spacing:-0.03px;">(60)</div>
<div class="a" style="left:1101px;top:249px;width:127px;height:24.5px;background:#232323;border:1px solid #3d3d3d;border-radius:4px"></div>
<div class="t" style="left:1111.3px;top:256.04px;font-family:'Liberation Sans',sans-serif;font-size:12px;font-weight:700;color:#fff;letter-spacing:-0.3px;">Отключить все ...</div>
<svg style="left:1237.5px;top:255px" width="13" height="13"><path d="M0.5 0.5 L12.5 12.5 M12.5 0.5 L0.5 12.5" stroke="#d0d0d0" stroke-width="1.3"/></svg>
<div class="a" style="left:961px;top:290px;width:319px;height:1px;background:#3b3b3b;"></div>
<div class="a" style="left:982px;top:317px;width:32px;height:32px;border-radius:16px;background:#f1d6da"></div>
<div class="t" style="left:982.0px;top:327.24px;font-family:'Liberation Sans',sans-serif;font-size:12px;font-weight:700;color:#8a2f3c;letter-spacing:0px;width:32px;text-align:center">КЙ</div>
<div class="t" style="left:1022.0px;top:326.75px;font-family:'Liberation Sans',sans-serif;font-size:14px;font-weight:400;color:#ededed;letter-spacing:0.04px;">Казанжи Марія Йосипівна</div>
<svg style="left:1229.4px;top:324.4px" width="15.2" height="17.1" viewBox="0 0 16 18"><path d="M5 4 A3 3 0 0 1 11 4 V8.5 A3 3 0 0 1 5.6 10.3" fill="none" stroke="#dcdcdc" stroke-width="1.2"/><path d="M2.5 8 A5.5 5.5 0 0 0 11.5 12.3 M13.5 8 A5.5 5.5 0 0 1 13 10.2 M8 13.5 V17" fill="none" stroke="#dcdcdc" stroke-width="1.2"/><path d="M1.5 1 L14.5 17" stroke="#dcdcdc" stroke-width="1.2"/></svg>
<svg style="left:982px;top:365px" width="32" height="32" viewBox="0 0 32 32"><defs><clipPath id="cp1"><circle cx="16" cy="16" r="16"/></clipPath><filter id="fp1"><feGaussianBlur stdDeviation=".6"/></filter></defs><g clip-path="url(#cp1)" filter="url(#fp1)"><rect width="32" height="32" fill="#d9d2c4"/><ellipse cx="15" cy="11" rx="6" ry="8" fill="#3a2a22"/><ellipse cx="15" cy="12" rx="4" ry="5.5" fill="#e0b8a0"/><path d="M3 32 C5 22 10 19 15 19 C21 19 27 22 29 32 Z" fill="#151515"/><path d="M24 22 L32 24 V30 L26 30 Z" fill="#c9c2b0"/></g></svg>
<div class="t" style="left:1022.0px;top:374.75px;font-family:'Liberation Sans',sans-serif;font-size:14px;font-weight:400;color:#ededed;letter-spacing:-0.21px;">Адашкевич Валерія Олексіївна</div>
<svg style="left:1229.4px;top:372.4px" width="15.2" height="17.1" viewBox="0 0 16 18"><path d="M5 4 A3 3 0 0 1 11 4 V8.5 A3 3 0 0 1 5.6 10.3" fill="none" stroke="#dcdcdc" stroke-width="1.2"/><path d="M2.5 8 A5.5 5.5 0 0 0 11.5 12.3 M13.5 8 A5.5 5.5 0 0 1 13 10.2 M8 13.5 V17" fill="none" stroke="#dcdcdc" stroke-width="1.2"/><path d="M1.5 1 L14.5 17" stroke="#dcdcdc" stroke-width="1.2"/></svg>
<div class="a" style="left:982px;top:413px;width:32px;height:32px;border-radius:16px;background:#cde3d6"></div>
<div class="t" style="left:982.0px;top:423.24px;font-family:'Liberation Sans',sans-serif;font-size:12px;font-weight:700;color:#2b6a48;letter-spacing:0px;width:32px;text-align:center">АБ</div>
<div class="t" style="left:1022.0px;top:416.55px;font-family:'Liberation Sans',sans-serif;font-size:14px;font-weight:400;color:#ededed;letter-spacing:-0.2px;">Анастасия Бун... (внешний)</div>
<div class="t" style="left:1022.0px;top:433.24px;font-family:'Liberation Sans',sans-serif;font-size:12px;font-weight:400;color:#9a9a9a;letter-spacing:-0.14px;">Внешний</div>
<svg style="left:1229.4px;top:420.4px" width="15.2" height="17.1" viewBox="0 0 16 18"><path d="M5 4 A3 3 0 0 1 11 4 V8.5 A3 3 0 0 1 5.6 10.3" fill="none" stroke="#dcdcdc" stroke-width="1.2"/><path d="M2.5 8 A5.5 5.5 0 0 0 11.5 12.3 M13.5 8 A5.5 5.5 0 0 1 13 10.2 M8 13.5 V17" fill="none" stroke="#dcdcdc" stroke-width="1.2"/><path d="M1.5 1 L14.5 17" stroke="#dcdcdc" stroke-width="1.2"/></svg>
<svg style="left:982px;top:461px" width="32" height="32" viewBox="0 0 32 32"><defs><clipPath id="cp2"><circle cx="16" cy="16" r="16"/></clipPath><filter id="fp2"><feGaussianBlur stdDeviation=".6"/></filter></defs><g clip-path="url(#cp2)" filter="url(#fp2)"><rect width="32" height="32" fill="#e8e4de"/><ellipse cx="16" cy="10" rx="6" ry="6.5" fill="#3a3a3a"/><ellipse cx="16" cy="12" rx="4.5" ry="5.5" fill="#d6ae98"/><path d="M4 32 C6 22 11 19 16 19 C22 19 27 22 29 32 Z" fill="#f2f2f2"/><path d="M12 20 L16 30 L20 20 Z" fill="#2a2a2a"/><path d="M22 20 L30 22 V32 H24 Z" fill="#4a3a30"/></g></svg>
<div class="t" style="left:1022.0px;top:470.75px;font-family:'Liberation Sans',sans-serif;font-size:14px;font-weight:400;color:#ededed;letter-spacing:-0.26px;">Атаханов Бахтіяр Камалдінов...</div>
<svg style="left:1229.4px;top:468.4px" width="15.2" height="17.1" viewBox="0 0 16 18"><path d="M5 4 A3 3 0 0 1 11 4 V8.5 A3 3 0 0 1 5.6 10.3" fill="none" stroke="#dcdcdc" stroke-width="1.2"/><path d="M2.5 8 A5.5 5.5 0 0 0 11.5 12.3 M13.5 8 A5.5 5.5 0 0 1 13 10.2 M8 13.5 V17" fill="none" stroke="#dcdcdc" stroke-width="1.2"/><path d="M1.5 1 L14.5 17" stroke="#dcdcdc" stroke-width="1.2"/></svg>
<svg style="left:982px;top:509px" width="32" height="32" viewBox="0 0 32 32"><defs><clipPath id="cp3"><circle cx="16" cy="16" r="16"/></clipPath><filter id="fp3"><feGaussianBlur stdDeviation=".6"/></filter></defs><g clip-path="url(#cp3)" filter="url(#fp3)"><rect width="32" height="32" fill="#2c3550"/><path d="M8 10 C8 2 28 2 28 10 Z" fill="#d9a43a"/><ellipse cx="18" cy="15" rx="8" ry="7" fill="#e2a9a0"/><path d="M6 22 C10 18 20 17 30 20 L32 26 L20 28 Z" fill="#e0402a"/><path d="M4 32 L10 24 L14 32 Z M16 32 L20 25 L24 32 Z" fill="#3d7a70"/><path d="M0 18 L6 14 L8 30 L0 30 Z" fill="#e87a3a" opacity=".8"/></g></svg>
<div class="t" style="left:1022.0px;top:518.75px;font-family:'Liberation Sans',sans-serif;font-size:14px;font-weight:400;color:#ededed;letter-spacing:-0.07px;">Базюк Юлія Зіновіївна</div>
<svg style="left:1229.4px;top:516.5px" width="15.2" height="17.1" viewBox="0 0 16 18"><path d="M5 4 A3 3 0 0 1 11 4 V8.5 A3 3 0 0 1 5.6 10.3" fill="none" stroke="#dcdcdc" stroke-width="1.2"/><path d="M2.5 8 A5.5 5.5 0 0 0 11.5 12.3 M13.5 8 A5.5 5.5 0 0 1 13 10.2 M8 13.5 V17" fill="none" stroke="#dcdcdc" stroke-width="1.2"/><path d="M1.5 1 L14.5 17" stroke="#dcdcdc" stroke-width="1.2"/></svg>
<svg style="left:982px;top:557px" width="32" height="32" viewBox="0 0 32 32"><defs><clipPath id="cp4"><circle cx="16" cy="16" r="16"/></clipPath><filter id="fp4"><feGaussianBlur stdDeviation=".6"/></filter></defs><g clip-path="url(#cp4)" filter="url(#fp4)"><rect width="32" height="32" fill="#4a4a48"/><ellipse cx="16" cy="14" rx="8" ry="10" fill="#8a5a3a"/><ellipse cx="16" cy="15" rx="5" ry="6.5" fill="#e6c0a8"/><path d="M4 32 C6 24 11 22 16 22 C21 22 26 24 28 32 Z" fill="#1b1b1b"/></g></svg>
<div class="t" style="left:1022.0px;top:566.75px;font-family:'Liberation Sans',sans-serif;font-size:14px;font-weight:400;color:#ededed;letter-spacing:-0.17px;">Білецька Катерина Євгенівна</div>
<svg style="left:1229.4px;top:564.5px" width="15.2" height="17.1" viewBox="0 0 16 18"><path d="M5 4 A3 3 0 0 1 11 4 V8.5 A3 3 0 0 1 5.6 10.3" fill="none" stroke="#dcdcdc" stroke-width="1.2"/><path d="M2.5 8 A5.5 5.5 0 0 0 11.5 12.3 M13.5 8 A5.5 5.5 0 0 1 13 10.2 M8 13.5 V17" fill="none" stroke="#dcdcdc" stroke-width="1.2"/><path d="M1.5 1 L14.5 17" stroke="#dcdcdc" stroke-width="1.2"/></svg>
<div class="a" style="left:982px;top:605px;width:32px;height:32px;border-radius:16px;background:#f1d6da"></div>
<div class="t" style="left:982.0px;top:614.80px;font-family:'Liberation Sans',sans-serif;font-size:13px;font-weight:400;color:#8a2f3c;letter-spacing:0px;width:32px;text-align:center">ВА</div>
<div class="t" style="left:1022.0px;top:614.75px;font-family:'Liberation Sans',sans-serif;font-size:14px;font-weight:400;color:#ededed;letter-spacing:-0.145px;">Василенко Ірина Анатоліївна</div>
<svg style="left:1229.4px;top:612.5px" width="15.2" height="17.1" viewBox="0 0 16 18"><path d="M5 4 A3 3 0 0 1 11 4 V8.5 A3 3 0 0 1 5.6 10.3" fill="none" stroke="#dcdcdc" stroke-width="1.2"/><path d="M2.5 8 A5.5 5.5 0 0 0 11.5 12.3 M13.5 8 A5.5 5.5 0 0 1 13 10.2 M8 13.5 V17" fill="none" stroke="#dcdcdc" stroke-width="1.2"/><path d="M1.5 1 L14.5 17" stroke="#dcdcdc" stroke-width="1.2"/></svg>
<svg style="left:982px;top:653px" width="32" height="32" viewBox="0 0 32 32"><defs><clipPath id="cp5"><circle cx="16" cy="16" r="16"/></clipPath><filter id="fp5"><feGaussianBlur stdDeviation=".6"/></filter></defs><g clip-path="url(#cp5)" filter="url(#fp5)"><rect width="32" height="32" fill="#fff"/><circle cx="16" cy="16" r="15" fill="none" stroke="#e23a3a" stroke-width="2"/><g fill="#6b5ab0"><circle cx="8" cy="10" r="1.2"/><circle cx="11" cy="8" r="1"/><circle cx="7" cy="14" r="1"/><circle cx="10" cy="13" r="1.2"/></g><g fill="#3a9a4a"><circle cx="22" cy="9" r="1"/><circle cx="24" cy="12" r="1.2"/></g><path d="M16 8 V24" stroke="#5aa0a0" stroke-width="1"/></g></svg>
<div class="t" style="left:1022.0px;top:662.75px;font-family:'Liberation Sans',sans-serif;font-size:14px;font-weight:400;color:#ededed;letter-spacing:-0.08px;">Вдовіченко Оксана Володим...</div>
<svg style="left:1229.4px;top:660.5px" width="15.2" height="17.1" viewBox="0 0 16 18"><path d="M5 4 A3 3 0 0 1 11 4 V8.5 A3 3 0 0 1 5.6 10.3" fill="none" stroke="#dcdcdc" stroke-width="1.2"/><path d="M2.5 8 A5.5 5.5 0 0 0 11.5 12.3 M13.5 8 A5.5 5.5 0 0 1 13 10.2 M8 13.5 V17" fill="none" stroke="#dcdcdc" stroke-width="1.2"/><path d="M1.5 1 L14.5 17" stroke="#dcdcdc" stroke-width="1.2"/></svg>



<!-- ===== TASKBAR ===== -->
<div class="a" style="left:0px;top:672px;width:1280px;height:48px;background:#f2e3ce;"></div>
<svg style="left:20px;top:684px" width="24" height="24"><defs><linearGradient id="sun" x1="0" y1="0" x2="0" y2="1"><stop offset="0" stop-color="#f9b233"/><stop offset="1" stop-color="#ec6a1a"/></linearGradient></defs><circle cx="12" cy="12" r="10" fill="url(#sun)"/></svg>
<div class="a" style="left:29px;top:680px;width:22px;height:13px;background:rgba(255,255,255,.9);border-radius:6px"></div>
<div class="t" style="left:30.5px;top:681.19px;font-family:'Liberation Sans',sans-serif;font-size:11px;font-weight:400;color:#222;letter-spacing:-0.4px;">24°</div>
<svg style="left:182px;top:685px" width="23" height="23"><defs><linearGradient id="win" x1="0" y1="0" x2="1" y2="1"><stop offset="0" stop-color="#2fc0f5"/><stop offset="1" stop-color="#0a6fd6"/></linearGradient></defs><rect x="0" y="0" width="11" height="11" fill="url(#win)"/><rect x="12" y="0" width="11" height="11" fill="url(#win)"/><rect x="0" y="12" width="11" height="11" fill="url(#win)"/><rect x="12" y="12" width="11" height="11" fill="url(#win)"/></svg>
<div class="a" style="left:220px;top:681px;width:217px;height:30px;background:#faf5ee;border-radius:15px;border:1px solid #e3d8c8"></div>
<svg style="left:230px;top:687px" width="17" height="17"><circle cx="7" cy="7" r="5.5" fill="none" stroke="#222" stroke-width="1.7"/><path d="M11 11 L15.5 15.5" stroke="#222" stroke-width="1.9"/></svg>
<div class="t" style="left:256.0px;top:688.65px;font-family:'Liberation Sans',sans-serif;font-size:14px;font-weight:400;color:#555;letter-spacing:-0.04px;">Пошук</div>
<svg style="left:388px;top:683px" width="48" height="27"><ellipse cx="24" cy="22" rx="19" ry="4.5" fill="#e7c9a0"/><path d="M6 12 L20 8 L23 19 L9 22 Z" fill="#6fb56a"/><path d="M8 12 L20 9 L22 18 L10 21 Z" fill="#f5f5f0"/><path d="M14 14 L24 3" stroke="#f0a020" stroke-width="2"/><circle cx="25" cy="2.5" r="1.5" fill="#e94a3a"/><path d="M28 22 V9 A7 7 0 0 1 42 9 V22 Z" fill="#2d7fe0"/><rect x="31" y="12" width="8" height="7" rx="2" fill="#5fa5f5"/><path d="M32 4 A3 3 0 0 1 38 4" fill="none" stroke="#2d7fe0" stroke-width="1.5"/></svg>
<svg style="left:450px;top:685px" width="25" height="23"><rect x="6" y="0" width="18" height="16" rx="2" fill="#f4f4f4" stroke="#d9d9d9" stroke-width=".6"/><rect x="1" y="6" width="17" height="16" rx="2" fill="#1e1e1e"/><rect x="6" y="6" width="12" height="10" fill="#9a9a9a"/></svg>
<svg style="left:494px;top:683px" width="24" height="24"><defs><linearGradient id="mt" x1="0" y1="0" x2="1" y2="1"><stop offset="0" stop-color="#8f6fe0"/><stop offset="1" stop-color="#5b4bc4"/></linearGradient></defs><path d="M12 1 A11 11 0 1 1 4 19.5 L1.5 23 L2.5 17 A11 11 0 0 1 12 1 Z" fill="url(#mt)"/><rect x="6" y="8" width="9" height="8" rx="1.5" fill="#fff"/><path d="M15 11 L19 8.5 V15.5 L15 13 Z" fill="#fff"/></svg>
<svg style="left:537px;top:684px" width="30" height="24" viewBox="0 0 30 24"><circle cx="17" cy="5" r="4" fill="#7b83eb"/><circle cx="25" cy="7" r="3" fill="#5059c9"/><rect x="10" y="10" width="13" height="12" rx="3" fill="#7b83eb"/><rect x="21" y="11" width="8" height="10" rx="3" fill="#5059c9"/><rect x="1" y="7" width="15" height="15" rx="1.5" fill="#4b53bc"/><path d="M4.5 10.5 H12.5 M8.5 10.5 V18.5" stroke="#fff" stroke-width="2.2"/><circle cx="24.5" cy="4.5" r="4" fill="#d1343a" stroke="#f2e3ce" stroke-width="1.2"/></svg>
<div class="a" style="left:548px;top:713px;width:5px;height:2px;background:#7a7a7a;border-radius:1px"></div>
<svg style="left:582px;top:684px" width="26" height="22"><defs><linearGradient id="ml" x1="0" y1="0" x2="0" y2="1"><stop offset="0" stop-color="#45b4f0"/><stop offset="1" stop-color="#1a86d8"/></linearGradient></defs><path d="M1 9 L13 1 L25 9 V21 H1 Z" fill="url(#ml)"/><path d="M4 8 H22 V13 L13 17 L4 13 Z" fill="#fff"/><path d="M1 9 L13 16 L25 9 V21 H1 Z" fill="#1f8fe0"/></svg>
<svg style="left:627px;top:684px" width="24" height="24"><defs><linearGradient id="ed" x1="0" y1="0" x2="1" y2="1"><stop offset="0" stop-color="#36d48a"/><stop offset=".5" stop-color="#1aa0d8"/><stop offset="1" stop-color="#0c5fb8"/></linearGradient></defs><circle cx="12" cy="12" r="11.5" fill="url(#ed)"/><path d="M6 14 C6 8 16 7 17 12 C15 10 10 11 10 15 C10 19 16 20 20 18 C17 22 6 22 6 14 Z" fill="#f2e3ce" opacity=".9"/></svg>
<svg style="left:671px;top:684px" width="24" height="23"><path d="M7 4 A5 3.5 0 0 1 17 4" fill="none" stroke="#3a9ae0" stroke-width="1.8"/><rect x="0.5" y="4" width="23" height="19" rx="2.5" fill="#1d4f8a"/><rect x="7" y="8" width="4.5" height="4.5" fill="#f25022"/><rect x="12.5" y="8" width="4.5" height="4.5" fill="#7fba00"/><rect x="7" y="13.5" width="4.5" height="4.5" fill="#00a4ef"/><rect x="12.5" y="13.5" width="4.5" height="4.5" fill="#ffb900"/></svg>
<svg style="left:715px;top:684px" width="23" height="23"><defs><linearGradient id="av" x1="0" y1="0" x2="1" y2="1"><stop offset="0" stop-color="#ff7a1a"/><stop offset=".5" stop-color="#f5b020"/><stop offset="1" stop-color="#7a3ae0"/></linearGradient></defs><circle cx="11.5" cy="11.5" r="11" fill="url(#av)"/><circle cx="11.5" cy="11.5" r="7.5" fill="#fff"/><path d="M8.5 9 A3 3 0 0 1 14.5 9 L13 15 H10 Z" fill="#2a2a5a"/></svg>
<svg style="left:759px;top:684px" width="23" height="23"><circle cx="11.5" cy="11.5" r="11" fill="#2aa3e0"/><path d="M5 11 L17 6.5 L15 17 L11 14 L9 16 L9 12.5 L15 8.5 L8 12 Z" fill="#fff"/></svg>
<div class="a" style="left:773px;top:684px;width:16px;height:11.5px;background:#e8443a;border-radius:5px"></div>
<div class="t" style="left:775.0px;top:685.88px;font-family:'Liberation Sans',sans-serif;font-size:9px;font-weight:400;color:#fff;letter-spacing:-0.3px;">46</div>
<div class="a" style="left:767px;top:713px;width:5px;height:2px;background:#7a7a7a;border-radius:1px"></div>
<div class="a" style="left:796px;top:677.5px;width:37px;height:37.5px;background:#f7efe4;border-radius:4px;border:1px solid #eadfce"></div>
<svg style="left:803px;top:684px" width="23" height="23" viewBox="0 0 24 24"><path d="M12 12 L22.4 6 A12 12 0 0 0 1.6 6 Z" fill="#ea4335"/><path d="M12 12 L1.6 6 A12 12 0 0 0 12 24 Z" fill="#34a853"/><path d="M12 12 L12 24 A12 12 0 0 0 22.4 6 Z" fill="#fbbc04"/><circle cx="12" cy="12" r="5.5" fill="#fff"/><circle cx="12" cy="12" r="4.3" fill="#1a73e8"/></svg>
<div class="a" style="left:815.5px;top:678px;width:17px;height:17px;border-radius:9px;background:#b0174f"></div>
<div class="t" style="left:815.5px;top:682.33px;font-family:'Liberation Sans',sans-serif;font-size:10px;font-weight:400;color:#fff;letter-spacing:0px;width:17px;text-align:center">M</div>
<div class="a" style="left:807px;top:713px;width:15px;height:3px;background:#1a73e8;border-radius:2px"></div>
<svg style="left:846px;top:684px" width="25" height="23"><rect x="6" y="0" width="19" height="23" rx="2" fill="#2b7cd3"/><rect x="6" y="6" width="19" height="6" fill="#185abd"/><rect x="6" y="12" width="19" height="6" fill="#103f91"/><rect x="0" y="5" width="13" height="13" rx="1.5" fill="#185abd"/><path d="M2.5 8 L4.3 15 L6.5 9.5 L8.7 15 L10.5 8" fill="none" stroke="#fff" stroke-width="1.4"/></svg>
<div class="a" style="left:856px;top:713px;width:5px;height:2px;background:#7a7a7a;border-radius:1px"></div>
<svg style="left:890px;top:685px" width="25" height="21"><path d="M0 2 A2 2 0 0 1 2 0 H9 L11 2 H23 A2 2 0 0 1 25 4 V19 A2 2 0 0 1 23 21 H2 A2 2 0 0 1 0 19 Z" fill="#e9b82a"/><rect x="0" y="5" width="25" height="16" rx="2" fill="#f8d04a"/><rect x="8" y="15" width="9" height="3" rx="1" fill="#2a7cd8"/></svg>
<div class="a" style="left:900px;top:713px;width:5px;height:2px;background:#7a7a7a;border-radius:1px"></div>
<svg style="left:993px;top:691px" width="13" height="8"><path d="M1 7 L6.5 1.5 L12 7" fill="none" stroke="#222" stroke-width="1.5"/></svg>
<svg style="left:1025px;top:686px" width="12" height="18"><rect x="3.3" y="1" width="5.4" height="10" rx="2.7" fill="none" stroke="#3a78c8" stroke-width="1.4"/><path d="M1 8.5 A5 5 0 0 0 11 8.5 M6 13.5 V17" fill="none" stroke="#3a78c8" stroke-width="1.4"/></svg>
<div class="t" style="left:1058.0px;top:689.84px;font-family:'Liberation Sans',sans-serif;font-size:12px;font-weight:400;color:#222;letter-spacing:-0.54px;">УКР</div>
<svg style="left:1097px;top:688px" width="18" height="14"><path d="M1 5 A11 11 0 0 1 17 5" fill="none" stroke="#222" stroke-width="1.5"/><path d="M4 8 A7 7 0 0 1 14 8" fill="none" stroke="#222" stroke-width="1.5"/><path d="M6.8 10.8 A3.2 3.2 0 0 1 11.2 10.8" fill="none" stroke="#222" stroke-width="1.5"/><circle cx="9" cy="12.8" r="1.2" fill="#222"/></svg>
<svg style="left:1122px;top:688px" width="18" height="15"><path d="M1 5 H4 L8 1.5 V13.5 L4 10 H1 Z" fill="none" stroke="#222" stroke-width="1.3" stroke-linejoin="round"/><path d="M11 5 A3 3 0 0 1 11 10 M13.5 3 A6 6 0 0 1 13.5 12 M16 1 A9 9 0 0 1 16 14" fill="none" stroke="#222" stroke-width="1.3"/></svg>
<svg style="left:1146px;top:688px" width="19" height="14"><rect x="1" y="3" width="14" height="10" rx="2" fill="none" stroke="#222" stroke-width="1.3"/><path d="M15.5 6.5 H17.5 V9.5 H15.5" fill="none" stroke="#222" stroke-width="1.3"/><path d="M8 1 L4 8 H8 L6 13" fill="none" stroke="#222" stroke-width="1.2"/></svg>
<div class="t" style="left:1207.5px;top:682.14px;font-family:'Liberation Sans',sans-serif;font-size:12px;font-weight:400;color:#222;letter-spacing:-0.3px;">14:40</div>
<div class="t" style="left:1179.0px;top:697.64px;font-family:'Liberation Sans',sans-serif;font-size:12px;font-weight:400;color:#222;letter-spacing:-0.3px;">23.05.2024</div>
<svg style="left:1243px;top:686px" width="18" height="18"><path d="M3 13 V8 A5.5 5.5 0 0 1 14 8 V13 L15.5 14.5 H1.5 Z" fill="#222"/><path d="M6.5 15.5 A2 2 0 0 0 10.5 15.5" fill="#222"/><text x="5" y="11.5" font-size="6.5" font-family="Liberation Sans" font-weight="bold" fill="#f2e3ce">z</text><text x="12" y="5" font-size="6" font-family="Liberation Sans" font-weight="bold" fill="#222">z</text></svg>

</body></html>
